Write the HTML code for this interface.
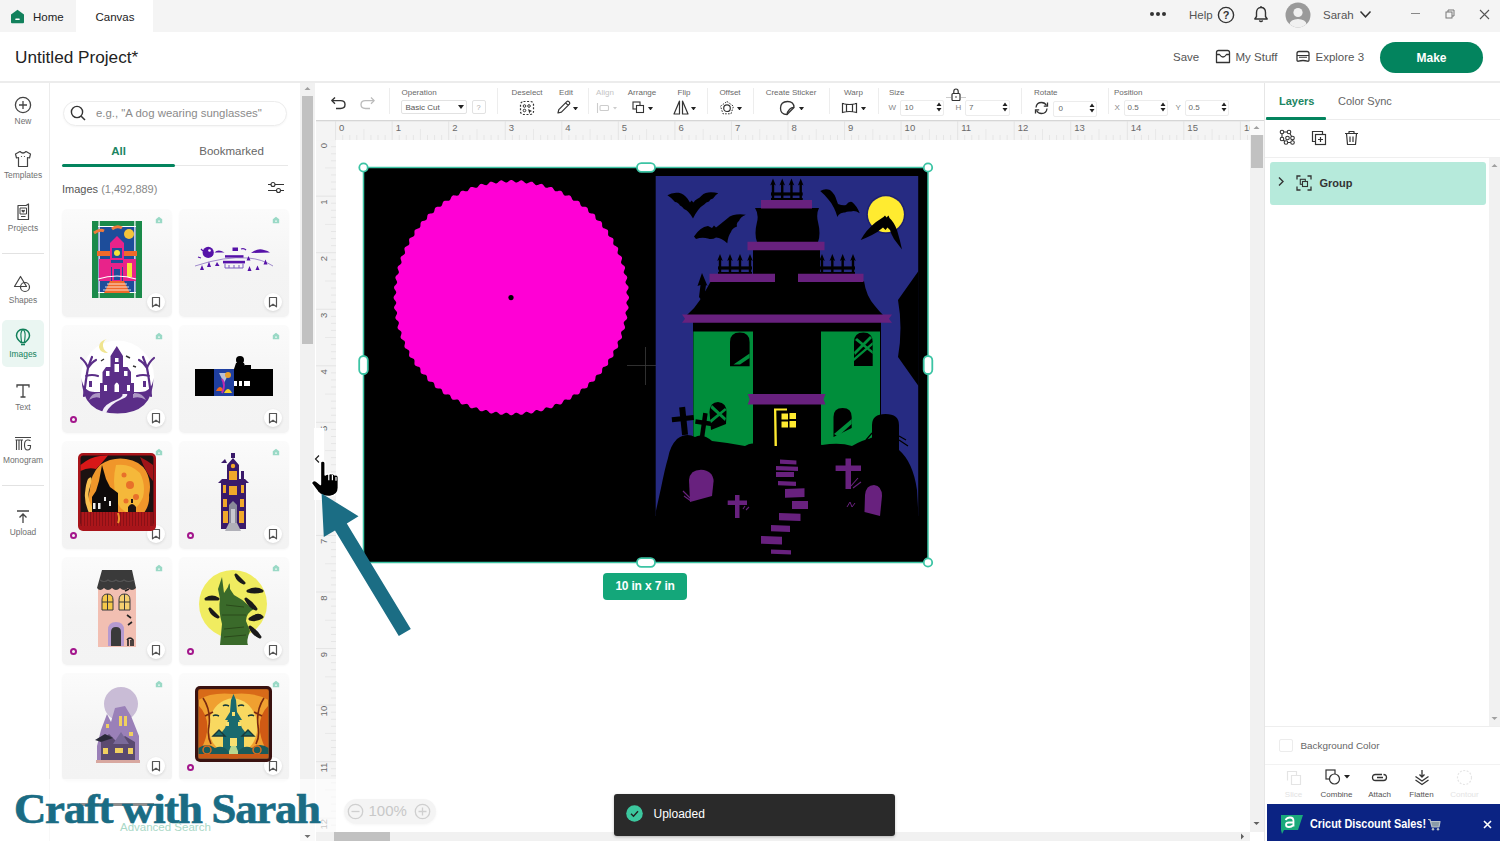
<!DOCTYPE html>
<html><head><meta charset="utf-8">
<style>
*{box-sizing:border-box;margin:0;padding:0}
html,body{width:1500px;height:841px;overflow:hidden;background:#fff;font-family:"Liberation Sans",sans-serif;color:#333}
.a{position:absolute}
.t{position:absolute;white-space:nowrap;line-height:1}
svg{display:block}
.lbl{font-size:8px;color:#6a6a6a;margin-top:1px}
.inp{height:16px;border:1px solid #ececec;border-radius:2px}

.card{width:110px;height:108px;border-radius:5px;background:linear-gradient(180deg,#fbfbfb 0%,#f4f4f4 55%,#f3f3f3 100%);box-shadow:0 1px 2px rgba(0,0,0,.03)}
.bm{width:18px;height:18px;border-radius:50%;background:#fff;box-shadow:0 1px 3px rgba(0,0,0,.12)}

</style></head><body>
<div class="a" style="left:0;top:0;width:1500px;height:841px;overflow:hidden">

<!-- top bar -->
<div class="a" style="left:0;top:0;width:1500px;height:32px;background:#f4f4f4"></div>
<div class="a" style="left:76px;top:0;width:77px;height:32px;background:#fff"></div>
<svg class="a" style="left:10px;top:9px" width="15" height="15" viewBox="0 0 15 15"><path d="M7.5 0.8 L14 5.6 V13.2 Q14 14.2 13 14.2 H2 Q1 14.2 1 13.2 V5.6 Z" fill="#12815c"/><rect x="5.3" y="9.6" width="4.4" height="1.4" fill="#fff" rx=".5"/></svg>
<div class="t" style="left:33px;top:11.5px;font-size:11.5px;color:#222">Home</div>
<div class="t" style="left:95.5px;top:11.5px;font-size:11.5px;color:#222">Canvas</div>
<div class="a" style="left:1150px;top:12px;width:4px;height:4px;border-radius:2px;background:#333"></div>
<div class="a" style="left:1156px;top:12px;width:4px;height:4px;border-radius:2px;background:#333"></div>
<div class="a" style="left:1162px;top:12px;width:4px;height:4px;border-radius:2px;background:#333"></div>
<div class="t" style="left:1189px;top:10px;font-size:11.5px;color:#555">Help</div>
<svg class="a" style="left:1217px;top:6px" width="18" height="18" viewBox="0 0 18 18"><circle cx="9" cy="9" r="7.6" fill="none" stroke="#333" stroke-width="1.4"/><text x="9" y="13" text-anchor="middle" font-family="Liberation Sans" font-weight="bold" font-size="11" fill="#333">?</text></svg>
<svg class="a" style="left:1252px;top:5px" width="18" height="19" viewBox="0 0 18 19"><path d="M9 2.5 C5.8 2.5 4.5 5 4.5 7.5 V11.5 L2.8 14 H15.2 L13.5 11.5 V7.5 C13.5 5 12.2 2.5 9 2.5 Z" fill="none" stroke="#333" stroke-width="1.4" stroke-linejoin="round"/><path d="M7.3 15.5 Q9 17.6 10.7 15.5" fill="none" stroke="#333" stroke-width="1.3"/><line x1="9" y1="1" x2="9" y2="2.5" stroke="#333" stroke-width="1.3"/></svg>
<svg class="a" style="left:1285px;top:2px" width="26" height="26" viewBox="0 0 26 26"><defs><clipPath id="av"><circle cx="13" cy="13" r="12.5"/></clipPath></defs><circle cx="13" cy="13" r="12.5" fill="#9a9a9a"/><g clip-path="url(#av)"><circle cx="13" cy="10.5" r="4.6" fill="#f0f0f0"/><ellipse cx="13" cy="22.5" rx="8.5" ry="5.5" fill="#f0f0f0"/></g></svg>
<div class="t" style="left:1323px;top:10px;font-size:11.5px;color:#555">Sarah</div>
<svg class="a" style="left:1359px;top:10px" width="13" height="9" viewBox="0 0 13 9"><path d="M1.5 1.5 L6.5 6.8 L11.5 1.5" fill="none" stroke="#333" stroke-width="1.5"/></svg>
<div class="a" style="left:1411px;top:13px;width:9px;height:1px;background:#888"></div>
<svg class="a" style="left:1445px;top:9px" width="10" height="10" viewBox="0 0 10 10"><rect x="1" y="3" width="6" height="6" fill="none" stroke="#777" stroke-width="1"/><path d="M3 3 V1 H9 V7 H7" fill="none" stroke="#777" stroke-width="1"/></svg>
<svg class="a" style="left:1479px;top:9px" width="11" height="11" viewBox="0 0 11 11"><path d="M1 1 L10 10 M10 1 L1 10" stroke="#555" stroke-width="1.1"/></svg>

<!-- header -->
<div class="a" style="left:0;top:81px;width:1500px;height:2px;background:#ececec"></div>
<div class="t" style="left:15px;top:48.5px;font-size:17.2px;color:#222">Untitled Project*</div>
<div class="t" style="left:1173px;top:52px;font-size:11.5px;color:#555">Save</div>
<svg class="a" style="left:1215px;top:49px" width="16" height="15" viewBox="0 0 16 15"><path d="M1.5 3.5 Q1.5 1.5 3.5 1.5 H12.5 Q14.5 1.5 14.5 3.5 V13.5 H1.5 Z" fill="none" stroke="#333" stroke-width="1.3" stroke-linejoin="round"/><path d="M1.5 5.5 H4.5 Q8 10.5 11.5 5.5 H14.5" fill="none" stroke="#333" stroke-width="1.3" stroke-linejoin="round"/></svg>
<div class="t" style="left:1235.5px;top:52px;font-size:11.5px;color:#555">My Stuff</div>
<svg class="a" style="left:1295px;top:50px" width="16" height="13" viewBox="0 0 16 13"><path d="M2 3.5 Q2 1.5 4 1.5 H12 Q14 1.5 14 3.5 V10 Q14 11.5 12.5 11.2 Q8 9.8 3.5 11.2 Q2 11.5 2 10 Z" fill="none" stroke="#333" stroke-width="1.3" stroke-linejoin="round"/><path d="M2 5.5 H14 M4 7.3 H12" stroke="#333" stroke-width="1.1"/></svg>
<div class="t" style="left:1315.5px;top:52px;font-size:11.5px;color:#555">Explore 3</div>
<div class="a" style="left:1380px;top:41.5px;width:103px;height:31px;border-radius:16px;background:#03845e"></div>
<div class="t" style="left:1380px;top:51.5px;width:103px;text-align:center;font-size:12px;font-weight:bold;color:#fff">Make</div>

<!-- left rail -->
<div class="a" style="left:49px;top:83px;width:1px;height:758px;background:#ececec"></div>
<svg class="a" style="left:14px;top:96px" width="18" height="18" viewBox="0 0 18 18"><circle cx="9" cy="9" r="7.6" fill="none" stroke="#444" stroke-width="1.3"/><path d="M9 5 V13 M5 9 H13" stroke="#444" stroke-width="1.3"/></svg>
<div class="t" style="left:0;top:117px;width:46px;text-align:center;font-size:8.4px;color:#707070">New</div>
<svg class="a" style="left:14px;top:150px" width="18" height="18" viewBox="0 0 18 18"><path d="M6 1.5 L1.5 4 L2.5 8 L4.5 7.5 V16.5 H13.5 V7.5 L15.5 8 L16.5 4 L12 1.5 Q9 4.5 6 1.5 Z" fill="none" stroke="#444" stroke-width="1.2" stroke-linejoin="round"/><circle cx="7.5" cy="6.5" r=".6" fill="#444"/><circle cx="10.5" cy="6.5" r=".6" fill="#444"/></svg>
<div class="t" style="left:0;top:171px;width:46px;text-align:center;font-size:8.4px;color:#707070">Templates</div>
<svg class="a" style="left:15px;top:203px" width="16" height="18" viewBox="0 0 16 18"><path d="M3 2.5 H11 L13.5 1 V16.5 H3 Z" fill="none" stroke="#444" stroke-width="1.2" stroke-linejoin="round"/><path d="M5 5 H11.5 V11 H5 Z" fill="none" stroke="#444" stroke-width="1"/><path d="M8.2 9.8 L6.6 8.2 Q6 7.2 7 6.7 Q7.7 6.5 8.2 7.2 Q8.7 6.5 9.4 6.7 Q10.4 7.2 9.8 8.2 Z" fill="#444"/><path d="M6 13.5 H10.5" stroke="#444" stroke-width="1"/></svg>
<div class="t" style="left:0;top:224px;width:46px;text-align:center;font-size:8.4px;color:#707070">Projects</div>
<div class="a" style="left:2px;top:253px;width:42px;height:1px;background:#e2e2e2"></div>
<svg class="a" style="left:13px;top:275px" width="20" height="18" viewBox="0 0 20 18"><path d="M7.5 1.5 L1.5 11.5 H13.5 Z" fill="none" stroke="#444" stroke-width="1.2" stroke-linejoin="round"/><circle cx="12" cy="12" r="4.5" fill="none" stroke="#444" stroke-width="1.2"/></svg>
<div class="t" style="left:0;top:296px;width:46px;text-align:center;font-size:8.4px;color:#707070">Shapes</div>
<div class="a" style="left:2px;top:320px;width:42px;height:47px;border-radius:5px;background:#eaf6f2"></div>
<svg class="a" style="left:15px;top:328px" width="16" height="19" viewBox="0 0 16 19"><path d="M8 1.2 C3.8 1.2 1.5 4.3 1.5 7.5 C1.5 10.5 4 12.8 6 14.5 H10 C12 12.8 14.5 10.5 14.5 7.5 C14.5 4.3 12.2 1.2 8 1.2 Z" fill="none" stroke="#12805b" stroke-width="1.5"/><path d="M8 1.5 C6 3 5.6 6 6 9 L6.5 14.5 M8 1.5 C10 3 10.4 6 10 9 L9.5 14.5" fill="none" stroke="#12805b" stroke-width="1.2"/><path d="M6 16.5 H10" stroke="#12805b" stroke-width="1.6"/></svg>
<div class="t" style="left:0;top:350px;width:46px;text-align:center;font-size:8.4px;color:#12805b">Images</div>
<svg class="a" style="left:15px;top:383px" width="16" height="16" viewBox="0 0 16 16"><path d="M2 4.5 V2 H14 V4.5 M8 2 V14 M5.5 14 H10.5" fill="none" stroke="#444" stroke-width="1.3"/></svg>
<div class="t" style="left:0;top:403px;width:46px;text-align:center;font-size:8.4px;color:#707070">Text</div>
<svg class="a" style="left:14px;top:436px" width="18" height="16" viewBox="0 0 18 16"><path d="M1 1.5 H17 M1.5 4 H9 M2.5 4 V14 M5 4 V14 M7.5 4 V14 M16.5 5 Q15.5 3.8 13.5 4 Q10.5 4.3 10.5 9 Q10.5 14 13.5 14 Q16.5 14 16.5 10.5 V9.5 H13.5" fill="none" stroke="#444" stroke-width="1.1"/></svg>
<div class="t" style="left:0;top:456px;width:46px;text-align:center;font-size:8.4px;color:#707070">Monogram</div>
<div class="a" style="left:2px;top:485px;width:42px;height:1px;background:#e2e2e2"></div>
<svg class="a" style="left:15px;top:509px" width="16" height="16" viewBox="0 0 16 16"><path d="M2 2 H14 M8 5 V14 M4.5 8.5 L8 5 L11.5 8.5" fill="none" stroke="#444" stroke-width="1.3"/></svg>
<div class="t" style="left:0;top:528px;width:46px;text-align:center;font-size:8.4px;color:#707070">Upload</div>

<!-- left panel -->
<div class="a" style="left:63px;top:101px;width:224px;height:25px;border-radius:13px;border:1px solid #ececec;box-shadow:0 1px 2px rgba(0,0,0,.04)"></div>
<svg class="a" style="left:70px;top:105px" width="17" height="16" viewBox="0 0 17 16"><circle cx="7" cy="7" r="5.6" fill="none" stroke="#333" stroke-width="1.4"/><path d="M11.2 11.2 L15 15" stroke="#333" stroke-width="1.5"/></svg>
<div class="t" style="left:96px;top:108px;font-size:11.4px;color:#8a8a8a">e.g., "A dog wearing sunglasses"</div>
<div class="t" style="left:62px;top:146px;width:113px;text-align:center;font-size:11.5px;font-weight:bold;color:#1b8562">All</div>
<div class="t" style="left:175px;top:146px;width:113px;text-align:center;font-size:11.5px;color:#666">Bookmarked</div>
<div class="a" style="left:62px;top:165px;width:226px;height:1px;background:#e8e8e8"></div>
<div class="a" style="left:62px;top:164px;width:113px;height:3px;border-radius:2px;background:#03845e"></div>
<div class="t" style="left:62px;top:183.5px;font-size:11px;color:#555">Images <span style="color:#888">(1,492,889)</span></div>
<svg class="a" style="left:267px;top:181px" width="18" height="13" viewBox="0 0 18 13"><path d="M1 3.5 H17 M1 9.5 H17" stroke="#333" stroke-width="1.1"/><circle cx="6" cy="3.5" r="2" fill="#fff" stroke="#333" stroke-width="1.1"/><circle cx="11.5" cy="9.5" r="2" fill="#fff" stroke="#333" stroke-width="1.1"/></svg>
<!-- cards -->
<div class="a card" style="left:62px;top:209px"></div>
<svg class="a" style="left:155px;top:216px" width="8" height="8" viewBox="0 0 8 8"><path d="M4 0.8 L7.2 3.2 V7.2 H0.8 V3.2 Z" fill="#9ad9c6"/><rect x="3" y="4.6" width="2" height="1" fill="#fff"/></svg>
<div class="a bm" style="left:147px;top:293px"><svg width="18" height="18" viewBox="0 0 18 18"><path d="M5.5 4.5 H12.5 V13.8 L9 11.2 L5.5 13.8 Z" fill="none" stroke="#555" stroke-width="1.2" stroke-linejoin="round"/></svg></div>
<div class="a card" style="left:179px;top:209px"></div>
<svg class="a" style="left:272px;top:216px" width="8" height="8" viewBox="0 0 8 8"><path d="M4 0.8 L7.2 3.2 V7.2 H0.8 V3.2 Z" fill="#9ad9c6"/><rect x="3" y="4.6" width="2" height="1" fill="#fff"/></svg>
<div class="a bm" style="left:264px;top:293px"><svg width="18" height="18" viewBox="0 0 18 18"><path d="M5.5 4.5 H12.5 V13.8 L9 11.2 L5.5 13.8 Z" fill="none" stroke="#555" stroke-width="1.2" stroke-linejoin="round"/></svg></div>
<div class="a card" style="left:62px;top:325px"></div>
<svg class="a" style="left:155px;top:332px" width="8" height="8" viewBox="0 0 8 8"><path d="M4 0.8 L7.2 3.2 V7.2 H0.8 V3.2 Z" fill="#9ad9c6"/><rect x="3" y="4.6" width="2" height="1" fill="#fff"/></svg>
<div class="a bm" style="left:147px;top:409px"><svg width="18" height="18" viewBox="0 0 18 18"><path d="M5.5 4.5 H12.5 V13.8 L9 11.2 L5.5 13.8 Z" fill="none" stroke="#555" stroke-width="1.2" stroke-linejoin="round"/></svg></div>
<div class="a" style="left:70px;top:416px;width:7px;height:7px;border-radius:50%;border:2px solid #a3168c"></div>
<div class="a card" style="left:179px;top:325px"></div>
<svg class="a" style="left:272px;top:332px" width="8" height="8" viewBox="0 0 8 8"><path d="M4 0.8 L7.2 3.2 V7.2 H0.8 V3.2 Z" fill="#9ad9c6"/><rect x="3" y="4.6" width="2" height="1" fill="#fff"/></svg>
<div class="a bm" style="left:264px;top:409px"><svg width="18" height="18" viewBox="0 0 18 18"><path d="M5.5 4.5 H12.5 V13.8 L9 11.2 L5.5 13.8 Z" fill="none" stroke="#555" stroke-width="1.2" stroke-linejoin="round"/></svg></div>
<div class="a card" style="left:62px;top:441px"></div>
<svg class="a" style="left:155px;top:448px" width="8" height="8" viewBox="0 0 8 8"><path d="M4 0.8 L7.2 3.2 V7.2 H0.8 V3.2 Z" fill="#9ad9c6"/><rect x="3" y="4.6" width="2" height="1" fill="#fff"/></svg>
<div class="a bm" style="left:147px;top:525px"><svg width="18" height="18" viewBox="0 0 18 18"><path d="M5.5 4.5 H12.5 V13.8 L9 11.2 L5.5 13.8 Z" fill="none" stroke="#555" stroke-width="1.2" stroke-linejoin="round"/></svg></div>
<div class="a" style="left:70px;top:532px;width:7px;height:7px;border-radius:50%;border:2px solid #a3168c"></div>
<div class="a card" style="left:179px;top:441px"></div>
<svg class="a" style="left:272px;top:448px" width="8" height="8" viewBox="0 0 8 8"><path d="M4 0.8 L7.2 3.2 V7.2 H0.8 V3.2 Z" fill="#9ad9c6"/><rect x="3" y="4.6" width="2" height="1" fill="#fff"/></svg>
<div class="a bm" style="left:264px;top:525px"><svg width="18" height="18" viewBox="0 0 18 18"><path d="M5.5 4.5 H12.5 V13.8 L9 11.2 L5.5 13.8 Z" fill="none" stroke="#555" stroke-width="1.2" stroke-linejoin="round"/></svg></div>
<div class="a" style="left:187px;top:532px;width:7px;height:7px;border-radius:50%;border:2px solid #a3168c"></div>
<div class="a card" style="left:62px;top:557px"></div>
<svg class="a" style="left:155px;top:564px" width="8" height="8" viewBox="0 0 8 8"><path d="M4 0.8 L7.2 3.2 V7.2 H0.8 V3.2 Z" fill="#9ad9c6"/><rect x="3" y="4.6" width="2" height="1" fill="#fff"/></svg>
<div class="a bm" style="left:147px;top:641px"><svg width="18" height="18" viewBox="0 0 18 18"><path d="M5.5 4.5 H12.5 V13.8 L9 11.2 L5.5 13.8 Z" fill="none" stroke="#555" stroke-width="1.2" stroke-linejoin="round"/></svg></div>
<div class="a" style="left:70px;top:648px;width:7px;height:7px;border-radius:50%;border:2px solid #a3168c"></div>
<div class="a card" style="left:179px;top:557px"></div>
<svg class="a" style="left:272px;top:564px" width="8" height="8" viewBox="0 0 8 8"><path d="M4 0.8 L7.2 3.2 V7.2 H0.8 V3.2 Z" fill="#9ad9c6"/><rect x="3" y="4.6" width="2" height="1" fill="#fff"/></svg>
<div class="a bm" style="left:264px;top:641px"><svg width="18" height="18" viewBox="0 0 18 18"><path d="M5.5 4.5 H12.5 V13.8 L9 11.2 L5.5 13.8 Z" fill="none" stroke="#555" stroke-width="1.2" stroke-linejoin="round"/></svg></div>
<div class="a" style="left:187px;top:648px;width:7px;height:7px;border-radius:50%;border:2px solid #a3168c"></div>
<div class="a card" style="left:62px;top:673px"></div>
<svg class="a" style="left:155px;top:680px" width="8" height="8" viewBox="0 0 8 8"><path d="M4 0.8 L7.2 3.2 V7.2 H0.8 V3.2 Z" fill="#9ad9c6"/><rect x="3" y="4.6" width="2" height="1" fill="#fff"/></svg>
<div class="a bm" style="left:147px;top:757px"><svg width="18" height="18" viewBox="0 0 18 18"><path d="M5.5 4.5 H12.5 V13.8 L9 11.2 L5.5 13.8 Z" fill="none" stroke="#555" stroke-width="1.2" stroke-linejoin="round"/></svg></div>
<div class="a card" style="left:179px;top:673px"></div>
<svg class="a" style="left:272px;top:680px" width="8" height="8" viewBox="0 0 8 8"><path d="M4 0.8 L7.2 3.2 V7.2 H0.8 V3.2 Z" fill="#9ad9c6"/><rect x="3" y="4.6" width="2" height="1" fill="#fff"/></svg>
<div class="a bm" style="left:264px;top:757px"><svg width="18" height="18" viewBox="0 0 18 18"><path d="M5.5 4.5 H12.5 V13.8 L9 11.2 L5.5 13.8 Z" fill="none" stroke="#555" stroke-width="1.2" stroke-linejoin="round"/></svg></div>
<div class="a" style="left:187px;top:764px;width:7px;height:7px;border-radius:50%;border:2px solid #a3168c"></div>
<!-- thumb 1: stained glass house -->
<svg class="a" style="left:92px;top:221px" width="50" height="77" viewBox="0 0 50 77">
<rect x="0" y="0" width="50" height="77" fill="#1a8a4a"/>
<rect x="4" y="4" width="42" height="69" fill="#fff"/>
<rect x="6" y="6" width="38" height="65" fill="#1d4d9a"/>
<rect x="0" y="0" width="6" height="77" fill="#1a8a4a"/><rect x="44" y="0" width="6" height="77" fill="#1a8a4a"/>
<rect x="0" y="0" width="50" height="5" fill="#1a8a4a"/><rect x="0" y="72" width="50" height="5" fill="#1a8a4a"/>
<rect x="6.5" y="0" width="1.2" height="77" fill="#fff"/><rect x="42.3" y="0" width="1.2" height="77" fill="#fff"/>
<path d="M2 12 Q8 8 12 10 M20 8 Q25 4 30 7" stroke="#f07a3a" stroke-width="3" fill="none"/>
<circle cx="37" cy="13" r="5" fill="#f5c43a"/>
<path d="M5 35 H45 V30 H5 Z" fill="#f06a2a"/>
<path d="M18 22 L25 15 L32 22 V28 H18 Z" fill="#e8238a"/>
<rect x="19" y="26" width="12" height="12" fill="#1d4d9a" stroke="#e8238a" stroke-width="2"/>
<circle cx="25" cy="32" r="3" fill="#f5e33a"/>
<path d="M7 38 H19 V60 H7 Z" fill="#e8238a"/>
<path d="M31 38 H44 V60 H31 Z" fill="#e8238a"/>
<rect x="35" y="42" width="5" height="14" fill="#f5e33a"/>
<rect x="19" y="42" width="12" height="4" fill="#e8238a"/>
<rect x="21" y="47" width="8" height="13" fill="#1d4d9a" stroke="#e8238a" stroke-width="2"/>
<path d="M12 72 L18 60 H32 L38 72 Z" fill="#f06a2a"/>
<path d="M13 66 H37 M15 63 H35 M11 69 H39" stroke="#fff" stroke-width=".8"/>
<path d="M6 58 Q25 52 44 58" stroke="#fff" stroke-width="1.2" fill="none"/>
</svg>
<!-- thumb 2: purple landscape -->
<svg class="a" style="left:190px;top:240px" width="90" height="40" viewBox="190 240 90 40">
<path d="M195 266 Q225 256 248 258 Q262 259 273 266" stroke="#8a70c0" stroke-width=".8" fill="none"/>
<circle cx="208.2" cy="252.4" r="5.6" fill="#5612a8"/><circle cx="209.5" cy="250.5" r="1.3" fill="#fff"/>
<path d="M214.5 252.5 Q218 248.5 224.5 252.5 Z" fill="#5612a8"/>
<path d="M201 249 L203 251 M198 257 L201 258" stroke="#5612a8" stroke-width="1.2"/>
<rect x="232.5" y="247.5" width="5.5" height="3.5" fill="#5612a8"/>
<rect x="225" y="255.2" width="18.5" height="2.4" fill="#5612a8"/>
<rect x="223" y="260.8" width="22" height="2.6" fill="#5612a8"/>
<path d="M225 263.5 V268 H243 V263.5 M229 268 V265 M234 268 V265 M239 268 V265" stroke="#7a5ac0" stroke-width="1" fill="none"/>
<path d="M241 249 Q244 248 246 250" stroke="#5612a8" stroke-width="1.3" fill="none"/>
<path d="M251 253 Q258 247.5 264 250 Q268 250.5 270 252.5 Z" fill="#5612a8"/>
<path d="M200 270 L202 265 L204 270 Z M207 267 L209 261.5 L211 267 Z M215 266 L217 262 L219.5 266 Z M246.5 260.5 L248.5 256 L250.5 260.5 Z M247.5 271 L249.5 266 L251.5 271 Z M255.5 270 L257.5 265.5 L259.5 270 Z M263.5 264.5 L265.5 259.5 L267.5 264.5 Z" fill="#5612a8"/>
</svg>
<!-- thumb 3: purple circle house -->
<svg class="a" style="left:75px;top:330px" width="85" height="90" viewBox="75 330 85 90">
<circle cx="117.5" cy="377" r="36.5" fill="#fff"/>
<path d="M107 339 Q99 341 99 347 Q100 353 108 353 Q102 349 103 344 Q104 340 107 339 Z" fill="#f0e590"/>
<path d="M81.5 378 Q82 413.5 117.5 413.5 Q153 413.5 153.5 378 Q152 392 140 392 H95 Q83 392 81.5 378 Z" fill="#5b2e88"/>
<path d="M106 413 Q110 404 122 399 Q130 396 126 392 H121 Q126 396 116 400 Q104 404 102 412 Z" fill="#f2eef8"/>
<path d="M133 393 Q142 392 146 400 Q140 396 133 398 Z M100 393 Q92 392 89 400 Q95 396 100 398 Z" fill="#fff" opacity=".5"/>
<path d="M84 396 Q86 378 88 368 Q86 362 81 358 M88 368 Q92 362 96 360 M86 376 Q92 374 98 376 M88 368 Q90 362 92 357 M151 396 Q149 378 147 368 Q149 362 154 358 M147 368 Q143 362 139 360 M149 376 Q143 374 137 376 M147 368 Q145 362 143 357" stroke="#5b2e88" stroke-width="2.2" fill="none" stroke-linecap="round"/>
<path d="M100 394 V383 H102.5 V372 L106 367 H110.5 V356 L116.8 346 L123 356 V367 H127.5 L131 372 V383 H134 V394 Z" fill="#5b2e88"/>
<path d="M115 358 H118.5 V362 H115 Z M114.5 364 H119 V372 H114.5 Z M106 371 H109.5 V376 H106 Z M124 371 H127.5 V376 H124 Z M104 385 H107 V391 H104 Z M127 385 H130 V391 H127 Z M114.5 385 Q116.8 380 119 385 V392 H114.5 Z" fill="#fff"/>
<path d="M89 387 V381 H92 V387 M143 387 V381 H146 V387" fill="#5b2e88"/>
<path d="M101 361 L104 359 M126 356 L130 358 M133 366 L136 367" stroke="#333" stroke-width="1.4"/>
</svg>
<!-- thumb 4: black strip -->
<svg class="a" style="left:194px;top:355px" width="80" height="42" viewBox="0 0 80 42">
<rect x="1" y="14" width="78" height="27" fill="#000"/>
<circle cx="46" cy="5" r="4" fill="#000"/><path d="M42 8 H50 L52 14 H40 Z" fill="#000"/>
<path d="M51 10 H57 V14 H51 Z" fill="#000"/>
<rect x="20" y="14" width="20" height="27" fill="#1f3fa0"/>
<path d="M25 18 L30 28 L35 18 Z" fill="#e0e0e0" opacity=".8"/>
<circle cx="34" cy="20" r="3" fill="#e8a02a"/>
<path d="M22 36 Q26 28 30 36 Z" fill="#f26a1a"/><path d="M30 38 Q34 30 38 38 Z" fill="#f5d02a"/>
<path d="M28 24 Q32 30 28 38" stroke="#c02ab0" stroke-width="2" fill="none"/>
<rect x="40" y="26" width="16" height="5" fill="#fff"/>
<rect x="43" y="25" width="2" height="6" fill="#000"/><rect x="48" y="25" width="2" height="6" fill="#000"/>
</svg>
<!-- thumb 5: red square -->
<svg class="a" style="left:78px;top:453px" width="78" height="78" viewBox="0 0 78 78">
<rect x="0" y="0" width="78" height="78" rx="5" fill="#a8141a"/>
<rect x="2.5" y="2.5" width="73" height="70" rx="3" fill="#1c1212"/>
<path d="M22 12 Q34 4 48 6 Q62 8 68 18 Q74 30 71 42 Q72 54 64 62 H14 Q8 50 12 36 Q12 22 22 12 Z" fill="#f0962a"/>
<path d="M38 12 Q52 10 62 20 Q68 32 65 44 Q60 56 50 60 Q40 56 38 44 Q34 28 38 12 Z" fill="#f5b83a"/>
<circle cx="52" cy="32" r="4" fill="#e8702a"/><circle cx="58" cy="44" r="3" fill="#e8702a"/><circle cx="46" cy="22" r="2.5" fill="#e8702a"/><circle cx="48" cy="48" r="2.5" fill="#e8702a"/>
<path d="M10 26 Q16 20 12 34 Q8 44 14 54 Q18 60 12 62 Q6 50 7 40 Q8 30 10 26 Z" fill="#f8c050"/>
<path d="M2.5 12 Q12 4 22 3 L30 2.5 Q24 10 18 16 Q10 14 2.5 18 Z" fill="#d81818"/>
<path d="M62 4 Q70 8 75 12 V28 Q68 20 62 4 Z" fill="#a01418"/>
<path d="M14 62 V44 L18 38 L21 28 L24 12 L28 26 L32 34 L40 40 V62 Z" fill="#0e0a0a"/>
<rect x="15" y="50" width="2.5" height="6" fill="#eee"/><rect x="20" y="50" width="2.5" height="6" fill="#eee"/><rect x="26" y="44" width="2" height="4" fill="#eee"/><rect x="31" y="48" width="2" height="5" fill="#eee"/>
<path d="M50 62 V54 Q54 48 58 54 V62 Z M53 50 V46 H55 V50 Z" fill="#1a1414"/>
<rect x="2.5" y="59" width="73" height="14" fill="#8a1016"/>
<path d="M5 59 V73 M8 59 V73 M11 59 V73 M14 59 V73 M17 59 V73 M20 59 V73 M23 59 V73 M26 59 V73 M29 59 V73 M32 59 V73 M35 59 V73 M38 59 V73 M41 59 V73 M44 59 V73 M47 59 V73 M50 59 V73 M53 59 V73 M56 59 V73 M59 59 V73 M62 59 V73 M65 59 V73 M68 59 V73 M71 59 V73" stroke="#c81c20" stroke-width="1.1"/>
<path d="M40 60 Q42 66 40 70" stroke="#f0962a" stroke-width="2" fill="none"/>
</svg>
<!-- thumb 6: tall purple house -->
<svg class="a" style="left:217px;top:453px" width="33" height="78" viewBox="0 0 33 78">
<path d="M4 76 V30 H1 L5 26 H10 V12 L16 5 L22 12 V26 H28 L32 30 H29 V76 Z" fill="#3a1a6a"/>
<path d="M14 5 V0 H18 V5 Z M4 10 L8 6 L10 10 Z M24 26 V18 H27 V26 Z" fill="#3a1a6a"/>
<circle cx="16" cy="13" r="2.2" fill="#f0a82a"/>
<rect x="12" y="18" width="8" height="9" fill="#f0a82a"/>
<rect x="12" y="33" width="8" height="9" fill="#f0a82a"/>
<rect x="6" y="32" width="3" height="8" fill="#f0a82a"/><rect x="24" y="32" width="3" height="8" fill="#f0a82a"/>
<rect x="6" y="46" width="4" height="8" fill="#f0a82a"/><rect x="23" y="46" width="4" height="8" fill="#f0a82a"/>
<rect x="6" y="58" width="5" height="12" fill="#f0a82a"/><rect x="22" y="58" width="5" height="12" fill="#f0a82a"/>
<path d="M12 70 V52 L16 48 L20 52 V70 Z" fill="#8a8a9a"/>
<path d="M8 78 L12 70 H20 L24 78 Z" fill="#b0b0b8"/>
<rect x="14" y="56" width="4" height="14" fill="#c8c8d0"/>
</svg>
<!-- thumb 7: pink house -->
<svg class="a" style="left:97px;top:570px" width="40" height="77" viewBox="0 0 40 77">
<rect x="1" y="18" width="38" height="59" fill="#f2bfb2"/>
<path d="M5 0 H35 L39 18 Q35 22 31 18 Q27 22 23 18 Q19 22 15 18 Q11 22 7 18 Q3 22 0 18 Z" fill="#3a3a3a"/>
<path d="M3 10 Q7 13 11 10 Q15 13 19 10 Q23 13 27 10 Q31 13 37 10" stroke="#555" stroke-width="1.2" fill="none"/>
<path d="M5 40 V30 Q5 24 10.5 24 Q16 24 16 30 V40 Z" fill="#f5c84a" stroke="#3a3a3a" stroke-width="1"/>
<path d="M22 40 V30 Q22 24 27.5 24 Q33 24 33 30 V40 Z" fill="#f5d070" stroke="#3a3a3a" stroke-width="1"/>
<path d="M10.5 24 V40 M5 32 H16 M27.5 24 V40 M22 32 H33" stroke="#3a3a3a" stroke-width="1"/>
<path d="M11 76 V60 Q11 52 19 52 Q27 52 27 60 V76 Z" fill="#b59ad0"/>
<path d="M14 76 V62 Q14 57 19 57 Q24 57 24 62 V76 Z" fill="#3a3a3a"/>
<path d="M30 70 Q33 66 36 70 V76 M31 76 V70 M34 76 V70" stroke="#222" stroke-width="1.6" fill="none"/>
<path d="M30 45 L34 48 M31 55 L35 52 M28 21 L32 19" stroke="#222" stroke-width="1.6"/>
</svg>
<!-- thumb 8: moon tower -->
<svg class="a" style="left:198px;top:569px" width="72" height="78" viewBox="0 0 72 78">
<circle cx="35" cy="35" r="34" fill="#f0ec60"/>
<path d="M22 76 L24 55 Q20 40 22 30 L20 20 L24 8 L26 24 L30 18 Q32 10 32 20 L36 26 Q44 30 50 36 L56 40 Q48 44 48 52 L52 62 Q48 72 50 76 Z" fill="#3a6a2a"/>
<path d="M26 60 L46 58 M24 46 L48 46 M28 36 L46 38 M26 68 L48 66" stroke="#2a4a1a" stroke-width="1"/>
<path d="M8 30 Q14 26 20 30 Q14 30 8 30 Z M38 6 Q42 10 46 14 Q40 12 38 6 Z M50 22 Q58 18 64 22 Q56 24 50 22 Z M48 30 Q54 34 58 40 Q52 38 48 30 Z M12 40 Q16 44 20 48 Q14 46 12 40 Z M52 50 Q60 44 64 48 Q58 52 52 50 Z M52 58 Q58 62 62 68 Q56 66 52 58 Z" stroke="#1a1a1a" stroke-width="3" fill="#1a1a1a" stroke-linejoin="round"/>
</svg>
<!-- thumb 9: purple victorian -->
<svg class="a" style="left:95px;top:686px" width="46" height="77" viewBox="0 0 46 77">
<circle cx="26" cy="18" r="17" fill="#c9bcd6"/>
<path d="M2 60 L6 44 L12 28 L16 36 L20 22 L30 20 L36 30 L40 40 L44 50 V74 H2 Z" fill="#9a80b8"/>
<path d="M6 74 V56 L14 48 L22 56 L30 50 L40 56 V74 Z" fill="#5a4a70"/>
<path d="M18 58 L26 46 L34 58 Z" fill="#7a6a9a"/>
<rect x="24" y="30" width="3" height="10" fill="#f0d060"/><rect x="29" y="30" width="3" height="10" fill="#f0d060"/>
<rect x="11" y="38" width="3" height="4" fill="#f0d060"/><rect x="34" y="46" width="4" height="4" fill="#f0d060"/>
<rect x="8" y="62" width="5" height="6" fill="#f0d060"/><rect x="20" y="62" width="8" height="5" fill="#f0d060"/><rect x="33" y="62" width="5" height="6" fill="#f0d060"/>
<path d="M0 54 L10 48 L18 52 L6 56 Z" fill="#2a2a3a"/>
<path d="M1 74 H45 V77 H1 Z" fill="#d8a8a0"/>
</svg>
<!-- thumb 10: orange square -->
<svg class="a" style="left:195px;top:686px" width="77" height="76" viewBox="0 0 77 76">
<rect x="0" y="0" width="77" height="76" rx="5" fill="#3a1210"/>
<rect x="3.5" y="3.5" width="70" height="69" rx="2" fill="#f0a030"/>
<path d="M3.5 3.5 H73.5 V14 Q60 6 38 8 Q16 6 3.5 14 Z" fill="#d86a18"/>
<path d="M38 12 Q56 14 62 34 Q64 52 54 62 H22 Q12 52 14 34 Q20 14 38 12 Z" fill="#f8d860"/>
<path d="M4 20 Q14 30 12 46 Q10 58 4 66 Z M73 20 Q63 30 65 46 Q67 58 73 66 Z" fill="#d05a14"/>
<path d="M8 12 Q16 24 14 40 Q12 50 16 58 M10 30 L18 26 M69 12 Q61 24 63 40 Q65 50 61 58 M67 30 L59 26" stroke="#7a2a10" stroke-width="1.6" fill="none"/>
<path d="M28 66 V50 L24 50 L30 42 L33 34 L30 34 L35 26 L36 14 L38.5 8 L41 14 L42 26 L47 34 L44 34 L47 42 L53 50 L49 50 V66 Z" fill="#1a6a6e"/>
<path d="M18 50 L24 44 L30 50 Z M47 50 L53 44 L59 50 Z M34 20 Q30 18 28 20 M43 20 Q47 18 49 20 M24 30 Q20 28 18 30 M53 30 Q57 28 59 30" stroke="#1a3a3a" stroke-width="1.4" fill="#1a6a6a"/>
<rect x="35" y="52" width="7" height="8" fill="#f8e070"/><rect x="31" y="36" width="3" height="4" fill="#f8e070"/><rect x="43" y="36" width="3" height="4" fill="#f8e070"/><rect x="37" y="26" width="3" height="4" fill="#f8e070"/>
<path d="M33 68 L36 60 H41 L44 68 Z" fill="#b8d890"/>
<path d="M3.5 62 Q12 56 20 62 Q28 58 34 66 V72.5 H3.5 Z M73.5 62 Q65 56 57 62 Q49 58 43 66 V72.5 H73.5 Z" fill="#1a5a5a"/>
<circle cx="12" cy="64" r="4" fill="none" stroke="#d86a1a" stroke-width="1.5"/><circle cx="62" cy="64" r="4" fill="none" stroke="#d86a1a" stroke-width="1.5"/>
<rect x="3.5" y="68" width="70" height="4.5" fill="#c85a18"/>
</svg>

<!-- left panel scrollbar -->
<div class="a" style="left:300px;top:83px;width:15px;height:758px;background:#f1f1f1"></div>
<div class="a" style="left:302px;top:96px;width:11px;height:248px;background:#c1c1c1"></div>

<!-- toolbar -->
<div class="a" style="left:316px;top:83px;width:948px;height:38px;background:#fff"></div>

<!-- toolbar content -->
<svg class="a" style="left:330px;top:96px" width="17" height="14" viewBox="0 0 17 14"><path d="M5 1.5 L1.8 4.6 L5 7.7" fill="none" stroke="#333" stroke-width="1.4" stroke-linejoin="round"/><path d="M2 4.6 H10.5 Q15 4.6 15 8.6 Q15 12.5 10.5 12.5 H6" fill="none" stroke="#333" stroke-width="1.4"/></svg>
<svg class="a" style="left:359px;top:96px" width="17" height="14" viewBox="0 0 17 14"><path d="M12 1.5 L15.2 4.6 L12 7.7" fill="none" stroke="#bbb" stroke-width="1.3" stroke-linejoin="round"/><path d="M15 4.6 H6.5 Q2 4.6 2 8.6 Q2 12.5 6.5 12.5 H11" fill="none" stroke="#bbb" stroke-width="1.3"/></svg>
<div class="a" style="left:388.5px;top:88px;width:1px;height:26px;background:#ededed"></div>
<div class="t lbl" style="left:401.5px;top:88px">Operation</div>
<div class="a" style="left:401px;top:100px;width:66px;height:14px;border:1px solid #e2e2e2;border-radius:2px"></div>
<div class="t" style="left:405.5px;top:103.5px;font-size:8px;color:#555">Basic Cut</div>
<svg class="a" style="left:458px;top:105px" width="6" height="4" viewBox="0 0 6 4"><path d="M0 0 H6 L3 4 Z" fill="#222"/></svg>
<div class="a" style="left:471.5px;top:100px;width:14px;height:14px;border:1px solid #e2e2e2;border-radius:2px"></div>
<div class="t" style="left:471.5px;top:103.5px;width:14px;text-align:center;font-size:7.5px;color:#aaa">?</div>
<div class="a" style="left:497px;top:88px;width:1px;height:26px;background:#ededed"></div>

<div class="t lbl" style="left:506px;top:88px;width:42px;text-align:center">Deselect</div>
<svg class="a" style="left:519px;top:100px" width="16" height="16" viewBox="0 0 16 16"><rect x="1.5" y="1.5" width="13" height="13" rx="3" fill="none" stroke="#333" stroke-width="1.2" stroke-dasharray="2 1.6"/><circle cx="5.5" cy="6" r="1.3" fill="none" stroke="#333" stroke-width="1"/><circle cx="10" cy="6" r="1.3" fill="none" stroke="#333" stroke-width="1"/><circle cx="5.5" cy="10.5" r="1.3" fill="none" stroke="#333" stroke-width="1"/><path d="M9 9 L13 11 L11 12 L10.5 14 Z" fill="#333"/></svg>
<div class="t lbl" style="left:552px;top:88px;width:28px;text-align:center">Edit</div>
<svg class="a" style="left:556px;top:100px" width="15" height="15" viewBox="0 0 15 15"><path d="M2 13 L2.8 9.6 L10.8 1.6 Q11.8 0.8 12.8 1.6 L13.4 2.2 Q14.2 3.2 13.4 4.2 L5.4 12.2 Z M9.6 2.8 L12.2 5.4" fill="none" stroke="#333" stroke-width="1.2" stroke-linejoin="round"/></svg>
<svg class="a" style="left:572.5px;top:106.5px" width="5" height="3.5" viewBox="0 0 5 3.5"><path d="M0 0 H5 L2.5 3.5 Z" fill="#222"/></svg>
<div class="a" style="left:588px;top:88px;width:1px;height:26px;background:#ededed"></div>

<div class="t lbl" style="left:590px;top:88px;width:30px;text-align:center;color:#c4c4c4">Align</div>
<svg class="a" style="left:596px;top:102px" width="22" height="12" viewBox="0 0 22 12"><path d="M1.5 1 V11" stroke="#ccc" stroke-width="1.1"/><rect x="4" y="3.5" width="8.5" height="5" rx="1" fill="none" stroke="#ccc" stroke-width="1.1"/><path d="M17 5 H21 L19 7.5 Z" fill="#ccc"/></svg>
<div class="t lbl" style="left:622px;top:88px;width:40px;text-align:center">Arrange</div>
<svg class="a" style="left:632px;top:101px" width="13" height="13" viewBox="0 0 13 13"><rect x="1" y="1" width="7" height="7" fill="none" stroke="#333" stroke-width="1.1"/><rect x="4.5" y="4.5" width="7" height="7" fill="#fff" stroke="#333" stroke-width="1.1"/></svg>
<svg class="a" style="left:647.5px;top:106.5px" width="5" height="3.5" viewBox="0 0 5 3.5"><path d="M0 0 H5 L2.5 3.5 Z" fill="#222"/></svg>
<div class="t lbl" style="left:670px;top:88px;width:28px;text-align:center">Flip</div>
<svg class="a" style="left:673px;top:100px" width="16" height="15" viewBox="0 0 16 15"><path d="M6.5 1 L1 14 H6.5 Z M9.5 1 L15 14 H9.5 Z" fill="none" stroke="#333" stroke-width="1.2" stroke-linejoin="round"/></svg>
<svg class="a" style="left:690.5px;top:106.5px" width="5" height="3.5" viewBox="0 0 5 3.5"><path d="M0 0 H5 L2.5 3.5 Z" fill="#222"/></svg>
<div class="a" style="left:707px;top:88px;width:1px;height:26px;background:#ededed"></div>

<div class="t lbl" style="left:714px;top:88px;width:32px;text-align:center">Offset</div>
<svg class="a" style="left:719px;top:100px" width="16" height="16" viewBox="0 0 16 16"><path d="M8 1.5 L14.5 6.2 L12 13.8 H4 L1.5 6.2 Z" fill="none" stroke="#333" stroke-width="1" stroke-dasharray="1.6 1.3"/><circle cx="8" cy="8.2" r="3.3" fill="none" stroke="#333" stroke-width="1.2"/></svg>
<svg class="a" style="left:736.5px;top:106.5px" width="5" height="3.5" viewBox="0 0 5 3.5"><path d="M0 0 H5 L2.5 3.5 Z" fill="#222"/></svg>
<div class="a" style="left:753px;top:88px;width:1px;height:26px;background:#ededed"></div>

<div class="t lbl" style="left:760px;top:88px;width:62px;text-align:center">Create Sticker</div>
<svg class="a" style="left:779px;top:100px" width="17" height="16" viewBox="0 0 17 16"><path d="M15 7.5 Q15 1.5 8.5 1.5 Q1.5 1.5 1.5 8.2 Q1.5 14.5 8 14.5 Z" fill="none" stroke="#333" stroke-width="1.3"/><path d="M8 14.5 Q8.5 8.5 15 7.5 Q10.5 7 8 14.5 Z" fill="none" stroke="#333" stroke-width="1.2"/></svg>
<svg class="a" style="left:798.5px;top:106.5px" width="5" height="3.5" viewBox="0 0 5 3.5"><path d="M0 0 H5 L2.5 3.5 Z" fill="#222"/></svg>
<div class="a" style="left:829px;top:88px;width:1px;height:26px;background:#ededed"></div>

<div class="t lbl" style="left:840px;top:88px;width:27px;text-align:center">Warp</div>
<svg class="a" style="left:841px;top:102px" width="17" height="12" viewBox="0 0 17 12"><path d="M1.5 1.5 Q8.5 3.5 15.5 1.5 V10.5 Q8.5 8.5 1.5 10.5 Z M5.5 2.5 V9.5 M11.5 2.5 V9.5 M1 1.5 H3 M1 10.5 H3 M14 1.5 H16 M14 10.5 H16" fill="none" stroke="#333" stroke-width="1.2"/></svg>
<svg class="a" style="left:860.5px;top:106.5px" width="5" height="3.5" viewBox="0 0 5 3.5"><path d="M0 0 H5 L2.5 3.5 Z" fill="#222"/></svg>
<div class="a" style="left:877.5px;top:88px;width:1px;height:26px;background:#ededed"></div>

<div class="t lbl" style="left:889px;top:88px">Size</div>
<div class="t" style="left:888.5px;top:103.5px;font-size:8px;color:#888">W</div>
<div class="a inp" style="left:900px;top:99.5px;width:44px"></div>
<div class="t" style="left:904.5px;top:103.5px;font-size:8px;color:#666">10</div>
<svg class="a spin" style="left:936px;top:101px" width="6" height="12" viewBox="0 0 6 12"><path d="M0.5 5 L3 1.5 L5.5 5 Z M0.5 7 L3 10.5 L5.5 7 Z" fill="#222"/></svg>
<svg class="a" style="left:945px;top:88px" width="22" height="13" viewBox="0 0 22 13"><path d="M1 9.5 H6 M16 9.5 H21" stroke="#ccc" stroke-width="1"/><rect x="7" y="5.5" width="8" height="7" rx="1" fill="none" stroke="#333" stroke-width="1.2"/><path d="M8.8 5.5 V3.5 Q8.8 1 11 1 Q13.2 1 13.2 3.5 V5.5" fill="none" stroke="#333" stroke-width="1.2"/><circle cx="11" cy="9" r=".8" fill="#333"/></svg>
<div class="t" style="left:955.5px;top:103.5px;font-size:8px;color:#888">H</div>
<div class="a inp" style="left:965px;top:99.5px;width:45px"></div>
<div class="t" style="left:969px;top:103.5px;font-size:8px;color:#666">7</div>
<svg class="a spin" style="left:1001.5px;top:101px" width="6" height="12" viewBox="0 0 6 12"><path d="M0.5 5 L3 1.5 L5.5 5 Z M0.5 7 L3 10.5 L5.5 7 Z" fill="#222"/></svg>
<div class="a" style="left:1020.5px;top:88px;width:1px;height:26px;background:#ededed"></div>

<div class="t lbl" style="left:1034px;top:88px">Rotate</div>
<svg class="a" style="left:1034px;top:101px" width="15" height="14" viewBox="0 0 15 14"><path d="M2 6.5 Q2.5 1.5 7.5 1.5 Q11 1.5 12.5 4.5 M13 7.5 Q12.5 12.5 7.5 12.5 Q4 12.5 2.5 9.5" fill="none" stroke="#333" stroke-width="1.3"/><path d="M13.5 1.5 V5.2 H9.8 M1.5 12.5 V8.8 H5.2" fill="none" stroke="#333" stroke-width="1.3"/></svg>
<div class="a inp" style="left:1053px;top:100.5px;width:43.5px"></div>
<div class="t" style="left:1058.5px;top:104.5px;font-size:8px;color:#666">0</div>
<svg class="a spin" style="left:1089px;top:102px" width="6" height="12" viewBox="0 0 6 12"><path d="M0.5 5 L3 1.5 L5.5 5 Z M0.5 7 L3 10.5 L5.5 7 Z" fill="#222"/></svg>
<div class="a" style="left:1108px;top:88px;width:1px;height:26px;background:#ededed"></div>

<div class="t lbl" style="left:1114px;top:88px">Position</div>
<div class="t" style="left:1114.5px;top:103.5px;font-size:8px;color:#888">X</div>
<div class="a inp" style="left:1124px;top:99.5px;width:43.5px"></div>
<div class="t" style="left:1127.5px;top:103.5px;font-size:8px;color:#666">0.5</div>
<svg class="a spin" style="left:1159.5px;top:101px" width="6" height="12" viewBox="0 0 6 12"><path d="M0.5 5 L3 1.5 L5.5 5 Z M0.5 7 L3 10.5 L5.5 7 Z" fill="#222"/></svg>
<div class="t" style="left:1175.5px;top:103.5px;font-size:8px;color:#888">Y</div>
<div class="a inp" style="left:1184.5px;top:99.5px;width:44px"></div>
<div class="t" style="left:1188.5px;top:103.5px;font-size:8px;color:#666">0.5</div>
<svg class="a spin" style="left:1220.5px;top:101px" width="6" height="12" viewBox="0 0 6 12"><path d="M0.5 5 L3 1.5 L5.5 5 Z M0.5 7 L3 10.5 L5.5 7 Z" fill="#222"/></svg>

<!-- rulers -->
<svg class="a" style="left:316px;top:120px" width="934" height="20" viewBox="316 120 934 20"><rect x="316" y="120" width="934" height="20" fill="#f4f4f4"/><rect x="316" y="120" width="934" height="1.3" fill="#d6d6d6"/><line x1="335.60" y1="121" x2="335.60" y2="140" stroke="#e4e4e4" stroke-width="1"/><line x1="342.67" y1="135" x2="342.67" y2="140" stroke="#e6e6e6" stroke-width="1"/><line x1="349.74" y1="135" x2="349.74" y2="140" stroke="#e6e6e6" stroke-width="1"/><line x1="356.81" y1="135" x2="356.81" y2="140" stroke="#e6e6e6" stroke-width="1"/><line x1="363.88" y1="129" x2="363.88" y2="140" stroke="#e8e8e8" stroke-width="1"/><line x1="370.94" y1="135" x2="370.94" y2="140" stroke="#e6e6e6" stroke-width="1"/><line x1="378.01" y1="135" x2="378.01" y2="140" stroke="#e6e6e6" stroke-width="1"/><line x1="385.08" y1="135" x2="385.08" y2="140" stroke="#e6e6e6" stroke-width="1"/><text x="339.10" y="131" font-family="Liberation Sans" font-size="9.5" fill="#6a6a6a">0</text><line x1="392.15" y1="121" x2="392.15" y2="140" stroke="#e4e4e4" stroke-width="1"/><line x1="399.22" y1="135" x2="399.22" y2="140" stroke="#e6e6e6" stroke-width="1"/><line x1="406.29" y1="135" x2="406.29" y2="140" stroke="#e6e6e6" stroke-width="1"/><line x1="413.36" y1="135" x2="413.36" y2="140" stroke="#e6e6e6" stroke-width="1"/><line x1="420.43" y1="129" x2="420.43" y2="140" stroke="#e8e8e8" stroke-width="1"/><line x1="427.49" y1="135" x2="427.49" y2="140" stroke="#e6e6e6" stroke-width="1"/><line x1="434.56" y1="135" x2="434.56" y2="140" stroke="#e6e6e6" stroke-width="1"/><line x1="441.63" y1="135" x2="441.63" y2="140" stroke="#e6e6e6" stroke-width="1"/><text x="395.65" y="131" font-family="Liberation Sans" font-size="9.5" fill="#6a6a6a">1</text><line x1="448.70" y1="121" x2="448.70" y2="140" stroke="#e4e4e4" stroke-width="1"/><line x1="455.77" y1="135" x2="455.77" y2="140" stroke="#e6e6e6" stroke-width="1"/><line x1="462.84" y1="135" x2="462.84" y2="140" stroke="#e6e6e6" stroke-width="1"/><line x1="469.91" y1="135" x2="469.91" y2="140" stroke="#e6e6e6" stroke-width="1"/><line x1="476.98" y1="129" x2="476.98" y2="140" stroke="#e8e8e8" stroke-width="1"/><line x1="484.04" y1="135" x2="484.04" y2="140" stroke="#e6e6e6" stroke-width="1"/><line x1="491.11" y1="135" x2="491.11" y2="140" stroke="#e6e6e6" stroke-width="1"/><line x1="498.18" y1="135" x2="498.18" y2="140" stroke="#e6e6e6" stroke-width="1"/><text x="452.20" y="131" font-family="Liberation Sans" font-size="9.5" fill="#6a6a6a">2</text><line x1="505.25" y1="121" x2="505.25" y2="140" stroke="#e4e4e4" stroke-width="1"/><line x1="512.32" y1="135" x2="512.32" y2="140" stroke="#e6e6e6" stroke-width="1"/><line x1="519.39" y1="135" x2="519.39" y2="140" stroke="#e6e6e6" stroke-width="1"/><line x1="526.46" y1="135" x2="526.46" y2="140" stroke="#e6e6e6" stroke-width="1"/><line x1="533.52" y1="129" x2="533.52" y2="140" stroke="#e8e8e8" stroke-width="1"/><line x1="540.59" y1="135" x2="540.59" y2="140" stroke="#e6e6e6" stroke-width="1"/><line x1="547.66" y1="135" x2="547.66" y2="140" stroke="#e6e6e6" stroke-width="1"/><line x1="554.73" y1="135" x2="554.73" y2="140" stroke="#e6e6e6" stroke-width="1"/><text x="508.75" y="131" font-family="Liberation Sans" font-size="9.5" fill="#6a6a6a">3</text><line x1="561.80" y1="121" x2="561.80" y2="140" stroke="#e4e4e4" stroke-width="1"/><line x1="568.87" y1="135" x2="568.87" y2="140" stroke="#e6e6e6" stroke-width="1"/><line x1="575.94" y1="135" x2="575.94" y2="140" stroke="#e6e6e6" stroke-width="1"/><line x1="583.01" y1="135" x2="583.01" y2="140" stroke="#e6e6e6" stroke-width="1"/><line x1="590.08" y1="129" x2="590.08" y2="140" stroke="#e8e8e8" stroke-width="1"/><line x1="597.14" y1="135" x2="597.14" y2="140" stroke="#e6e6e6" stroke-width="1"/><line x1="604.21" y1="135" x2="604.21" y2="140" stroke="#e6e6e6" stroke-width="1"/><line x1="611.28" y1="135" x2="611.28" y2="140" stroke="#e6e6e6" stroke-width="1"/><text x="565.30" y="131" font-family="Liberation Sans" font-size="9.5" fill="#6a6a6a">4</text><line x1="618.35" y1="121" x2="618.35" y2="140" stroke="#e4e4e4" stroke-width="1"/><line x1="625.42" y1="135" x2="625.42" y2="140" stroke="#e6e6e6" stroke-width="1"/><line x1="632.49" y1="135" x2="632.49" y2="140" stroke="#e6e6e6" stroke-width="1"/><line x1="639.56" y1="135" x2="639.56" y2="140" stroke="#e6e6e6" stroke-width="1"/><line x1="646.62" y1="129" x2="646.62" y2="140" stroke="#e8e8e8" stroke-width="1"/><line x1="653.69" y1="135" x2="653.69" y2="140" stroke="#e6e6e6" stroke-width="1"/><line x1="660.76" y1="135" x2="660.76" y2="140" stroke="#e6e6e6" stroke-width="1"/><line x1="667.83" y1="135" x2="667.83" y2="140" stroke="#e6e6e6" stroke-width="1"/><text x="621.85" y="131" font-family="Liberation Sans" font-size="9.5" fill="#6a6a6a">5</text><line x1="674.90" y1="121" x2="674.90" y2="140" stroke="#e4e4e4" stroke-width="1"/><line x1="681.97" y1="135" x2="681.97" y2="140" stroke="#e6e6e6" stroke-width="1"/><line x1="689.04" y1="135" x2="689.04" y2="140" stroke="#e6e6e6" stroke-width="1"/><line x1="696.11" y1="135" x2="696.11" y2="140" stroke="#e6e6e6" stroke-width="1"/><line x1="703.17" y1="129" x2="703.17" y2="140" stroke="#e8e8e8" stroke-width="1"/><line x1="710.24" y1="135" x2="710.24" y2="140" stroke="#e6e6e6" stroke-width="1"/><line x1="717.31" y1="135" x2="717.31" y2="140" stroke="#e6e6e6" stroke-width="1"/><line x1="724.38" y1="135" x2="724.38" y2="140" stroke="#e6e6e6" stroke-width="1"/><text x="678.40" y="131" font-family="Liberation Sans" font-size="9.5" fill="#6a6a6a">6</text><line x1="731.45" y1="121" x2="731.45" y2="140" stroke="#e4e4e4" stroke-width="1"/><line x1="738.52" y1="135" x2="738.52" y2="140" stroke="#e6e6e6" stroke-width="1"/><line x1="745.59" y1="135" x2="745.59" y2="140" stroke="#e6e6e6" stroke-width="1"/><line x1="752.66" y1="135" x2="752.66" y2="140" stroke="#e6e6e6" stroke-width="1"/><line x1="759.73" y1="129" x2="759.73" y2="140" stroke="#e8e8e8" stroke-width="1"/><line x1="766.79" y1="135" x2="766.79" y2="140" stroke="#e6e6e6" stroke-width="1"/><line x1="773.86" y1="135" x2="773.86" y2="140" stroke="#e6e6e6" stroke-width="1"/><line x1="780.93" y1="135" x2="780.93" y2="140" stroke="#e6e6e6" stroke-width="1"/><text x="734.95" y="131" font-family="Liberation Sans" font-size="9.5" fill="#6a6a6a">7</text><line x1="788.00" y1="121" x2="788.00" y2="140" stroke="#e4e4e4" stroke-width="1"/><line x1="795.07" y1="135" x2="795.07" y2="140" stroke="#e6e6e6" stroke-width="1"/><line x1="802.14" y1="135" x2="802.14" y2="140" stroke="#e6e6e6" stroke-width="1"/><line x1="809.21" y1="135" x2="809.21" y2="140" stroke="#e6e6e6" stroke-width="1"/><line x1="816.27" y1="129" x2="816.27" y2="140" stroke="#e8e8e8" stroke-width="1"/><line x1="823.34" y1="135" x2="823.34" y2="140" stroke="#e6e6e6" stroke-width="1"/><line x1="830.41" y1="135" x2="830.41" y2="140" stroke="#e6e6e6" stroke-width="1"/><line x1="837.48" y1="135" x2="837.48" y2="140" stroke="#e6e6e6" stroke-width="1"/><text x="791.50" y="131" font-family="Liberation Sans" font-size="9.5" fill="#6a6a6a">8</text><line x1="844.55" y1="121" x2="844.55" y2="140" stroke="#e4e4e4" stroke-width="1"/><line x1="851.62" y1="135" x2="851.62" y2="140" stroke="#e6e6e6" stroke-width="1"/><line x1="858.69" y1="135" x2="858.69" y2="140" stroke="#e6e6e6" stroke-width="1"/><line x1="865.76" y1="135" x2="865.76" y2="140" stroke="#e6e6e6" stroke-width="1"/><line x1="872.83" y1="129" x2="872.83" y2="140" stroke="#e8e8e8" stroke-width="1"/><line x1="879.89" y1="135" x2="879.89" y2="140" stroke="#e6e6e6" stroke-width="1"/><line x1="886.96" y1="135" x2="886.96" y2="140" stroke="#e6e6e6" stroke-width="1"/><line x1="894.03" y1="135" x2="894.03" y2="140" stroke="#e6e6e6" stroke-width="1"/><text x="848.05" y="131" font-family="Liberation Sans" font-size="9.5" fill="#6a6a6a">9</text><line x1="901.10" y1="121" x2="901.10" y2="140" stroke="#e4e4e4" stroke-width="1"/><line x1="908.17" y1="135" x2="908.17" y2="140" stroke="#e6e6e6" stroke-width="1"/><line x1="915.24" y1="135" x2="915.24" y2="140" stroke="#e6e6e6" stroke-width="1"/><line x1="922.31" y1="135" x2="922.31" y2="140" stroke="#e6e6e6" stroke-width="1"/><line x1="929.38" y1="129" x2="929.38" y2="140" stroke="#e8e8e8" stroke-width="1"/><line x1="936.44" y1="135" x2="936.44" y2="140" stroke="#e6e6e6" stroke-width="1"/><line x1="943.51" y1="135" x2="943.51" y2="140" stroke="#e6e6e6" stroke-width="1"/><line x1="950.58" y1="135" x2="950.58" y2="140" stroke="#e6e6e6" stroke-width="1"/><text x="904.60" y="131" font-family="Liberation Sans" font-size="9.5" fill="#6a6a6a">10</text><line x1="957.65" y1="121" x2="957.65" y2="140" stroke="#e4e4e4" stroke-width="1"/><line x1="964.72" y1="135" x2="964.72" y2="140" stroke="#e6e6e6" stroke-width="1"/><line x1="971.79" y1="135" x2="971.79" y2="140" stroke="#e6e6e6" stroke-width="1"/><line x1="978.86" y1="135" x2="978.86" y2="140" stroke="#e6e6e6" stroke-width="1"/><line x1="985.92" y1="129" x2="985.92" y2="140" stroke="#e8e8e8" stroke-width="1"/><line x1="992.99" y1="135" x2="992.99" y2="140" stroke="#e6e6e6" stroke-width="1"/><line x1="1000.06" y1="135" x2="1000.06" y2="140" stroke="#e6e6e6" stroke-width="1"/><line x1="1007.13" y1="135" x2="1007.13" y2="140" stroke="#e6e6e6" stroke-width="1"/><text x="961.15" y="131" font-family="Liberation Sans" font-size="9.5" fill="#6a6a6a">11</text><line x1="1014.20" y1="121" x2="1014.20" y2="140" stroke="#e4e4e4" stroke-width="1"/><line x1="1021.27" y1="135" x2="1021.27" y2="140" stroke="#e6e6e6" stroke-width="1"/><line x1="1028.34" y1="135" x2="1028.34" y2="140" stroke="#e6e6e6" stroke-width="1"/><line x1="1035.41" y1="135" x2="1035.41" y2="140" stroke="#e6e6e6" stroke-width="1"/><line x1="1042.47" y1="129" x2="1042.47" y2="140" stroke="#e8e8e8" stroke-width="1"/><line x1="1049.54" y1="135" x2="1049.54" y2="140" stroke="#e6e6e6" stroke-width="1"/><line x1="1056.61" y1="135" x2="1056.61" y2="140" stroke="#e6e6e6" stroke-width="1"/><line x1="1063.68" y1="135" x2="1063.68" y2="140" stroke="#e6e6e6" stroke-width="1"/><text x="1017.70" y="131" font-family="Liberation Sans" font-size="9.5" fill="#6a6a6a">12</text><line x1="1070.75" y1="121" x2="1070.75" y2="140" stroke="#e4e4e4" stroke-width="1"/><line x1="1077.82" y1="135" x2="1077.82" y2="140" stroke="#e6e6e6" stroke-width="1"/><line x1="1084.89" y1="135" x2="1084.89" y2="140" stroke="#e6e6e6" stroke-width="1"/><line x1="1091.96" y1="135" x2="1091.96" y2="140" stroke="#e6e6e6" stroke-width="1"/><line x1="1099.03" y1="129" x2="1099.03" y2="140" stroke="#e8e8e8" stroke-width="1"/><line x1="1106.09" y1="135" x2="1106.09" y2="140" stroke="#e6e6e6" stroke-width="1"/><line x1="1113.16" y1="135" x2="1113.16" y2="140" stroke="#e6e6e6" stroke-width="1"/><line x1="1120.23" y1="135" x2="1120.23" y2="140" stroke="#e6e6e6" stroke-width="1"/><text x="1074.25" y="131" font-family="Liberation Sans" font-size="9.5" fill="#6a6a6a">13</text><line x1="1127.30" y1="121" x2="1127.30" y2="140" stroke="#e4e4e4" stroke-width="1"/><line x1="1134.37" y1="135" x2="1134.37" y2="140" stroke="#e6e6e6" stroke-width="1"/><line x1="1141.44" y1="135" x2="1141.44" y2="140" stroke="#e6e6e6" stroke-width="1"/><line x1="1148.51" y1="135" x2="1148.51" y2="140" stroke="#e6e6e6" stroke-width="1"/><line x1="1155.57" y1="129" x2="1155.57" y2="140" stroke="#e8e8e8" stroke-width="1"/><line x1="1162.64" y1="135" x2="1162.64" y2="140" stroke="#e6e6e6" stroke-width="1"/><line x1="1169.71" y1="135" x2="1169.71" y2="140" stroke="#e6e6e6" stroke-width="1"/><line x1="1176.78" y1="135" x2="1176.78" y2="140" stroke="#e6e6e6" stroke-width="1"/><text x="1130.80" y="131" font-family="Liberation Sans" font-size="9.5" fill="#6a6a6a">14</text><line x1="1183.85" y1="121" x2="1183.85" y2="140" stroke="#e4e4e4" stroke-width="1"/><line x1="1190.92" y1="135" x2="1190.92" y2="140" stroke="#e6e6e6" stroke-width="1"/><line x1="1197.99" y1="135" x2="1197.99" y2="140" stroke="#e6e6e6" stroke-width="1"/><line x1="1205.06" y1="135" x2="1205.06" y2="140" stroke="#e6e6e6" stroke-width="1"/><line x1="1212.12" y1="129" x2="1212.12" y2="140" stroke="#e8e8e8" stroke-width="1"/><line x1="1219.19" y1="135" x2="1219.19" y2="140" stroke="#e6e6e6" stroke-width="1"/><line x1="1226.26" y1="135" x2="1226.26" y2="140" stroke="#e6e6e6" stroke-width="1"/><line x1="1233.33" y1="135" x2="1233.33" y2="140" stroke="#e6e6e6" stroke-width="1"/><text x="1187.35" y="131" font-family="Liberation Sans" font-size="9.5" fill="#6a6a6a">15</text><line x1="1240.40" y1="121" x2="1240.40" y2="140" stroke="#e4e4e4" stroke-width="1"/><line x1="1247.47" y1="135" x2="1247.47" y2="140" stroke="#e6e6e6" stroke-width="1"/><text x="1243.90" y="131" font-family="Liberation Sans" font-size="9.5" fill="#6a6a6a">16</text></svg>
<svg class="a" style="left:316px;top:140px" width="20" height="692" viewBox="316 140 20 692"><rect x="316" y="140" width="20" height="692" fill="#f4f4f4"/><line x1="316" y1="139.60" x2="336" y2="139.60" stroke="#e4e4e4" stroke-width="1"/><line x1="331" y1="146.67" x2="336" y2="146.67" stroke="#e6e6e6" stroke-width="1"/><line x1="331" y1="153.74" x2="336" y2="153.74" stroke="#e6e6e6" stroke-width="1"/><line x1="331" y1="160.81" x2="336" y2="160.81" stroke="#e6e6e6" stroke-width="1"/><line x1="325" y1="167.88" x2="336" y2="167.88" stroke="#e8e8e8" stroke-width="1"/><line x1="331" y1="174.94" x2="336" y2="174.94" stroke="#e6e6e6" stroke-width="1"/><line x1="331" y1="182.01" x2="336" y2="182.01" stroke="#e6e6e6" stroke-width="1"/><line x1="331" y1="189.08" x2="336" y2="189.08" stroke="#e6e6e6" stroke-width="1"/><text transform="translate(326.5,145.60) rotate(-90)" text-anchor="middle" font-family="Liberation Sans" font-size="9.5" fill="#6a6a6a">0</text><line x1="316" y1="196.15" x2="336" y2="196.15" stroke="#e4e4e4" stroke-width="1"/><line x1="331" y1="203.22" x2="336" y2="203.22" stroke="#e6e6e6" stroke-width="1"/><line x1="331" y1="210.29" x2="336" y2="210.29" stroke="#e6e6e6" stroke-width="1"/><line x1="331" y1="217.36" x2="336" y2="217.36" stroke="#e6e6e6" stroke-width="1"/><line x1="325" y1="224.42" x2="336" y2="224.42" stroke="#e8e8e8" stroke-width="1"/><line x1="331" y1="231.49" x2="336" y2="231.49" stroke="#e6e6e6" stroke-width="1"/><line x1="331" y1="238.56" x2="336" y2="238.56" stroke="#e6e6e6" stroke-width="1"/><line x1="331" y1="245.63" x2="336" y2="245.63" stroke="#e6e6e6" stroke-width="1"/><text transform="translate(326.5,202.15) rotate(-90)" text-anchor="middle" font-family="Liberation Sans" font-size="9.5" fill="#6a6a6a">1</text><line x1="316" y1="252.70" x2="336" y2="252.70" stroke="#e4e4e4" stroke-width="1"/><line x1="331" y1="259.77" x2="336" y2="259.77" stroke="#e6e6e6" stroke-width="1"/><line x1="331" y1="266.84" x2="336" y2="266.84" stroke="#e6e6e6" stroke-width="1"/><line x1="331" y1="273.91" x2="336" y2="273.91" stroke="#e6e6e6" stroke-width="1"/><line x1="325" y1="280.98" x2="336" y2="280.98" stroke="#e8e8e8" stroke-width="1"/><line x1="331" y1="288.04" x2="336" y2="288.04" stroke="#e6e6e6" stroke-width="1"/><line x1="331" y1="295.11" x2="336" y2="295.11" stroke="#e6e6e6" stroke-width="1"/><line x1="331" y1="302.18" x2="336" y2="302.18" stroke="#e6e6e6" stroke-width="1"/><text transform="translate(326.5,258.70) rotate(-90)" text-anchor="middle" font-family="Liberation Sans" font-size="9.5" fill="#6a6a6a">2</text><line x1="316" y1="309.25" x2="336" y2="309.25" stroke="#e4e4e4" stroke-width="1"/><line x1="331" y1="316.32" x2="336" y2="316.32" stroke="#e6e6e6" stroke-width="1"/><line x1="331" y1="323.39" x2="336" y2="323.39" stroke="#e6e6e6" stroke-width="1"/><line x1="331" y1="330.46" x2="336" y2="330.46" stroke="#e6e6e6" stroke-width="1"/><line x1="325" y1="337.52" x2="336" y2="337.52" stroke="#e8e8e8" stroke-width="1"/><line x1="331" y1="344.59" x2="336" y2="344.59" stroke="#e6e6e6" stroke-width="1"/><line x1="331" y1="351.66" x2="336" y2="351.66" stroke="#e6e6e6" stroke-width="1"/><line x1="331" y1="358.73" x2="336" y2="358.73" stroke="#e6e6e6" stroke-width="1"/><text transform="translate(326.5,315.25) rotate(-90)" text-anchor="middle" font-family="Liberation Sans" font-size="9.5" fill="#6a6a6a">3</text><line x1="316" y1="365.80" x2="336" y2="365.80" stroke="#e4e4e4" stroke-width="1"/><line x1="331" y1="372.87" x2="336" y2="372.87" stroke="#e6e6e6" stroke-width="1"/><line x1="331" y1="379.94" x2="336" y2="379.94" stroke="#e6e6e6" stroke-width="1"/><line x1="331" y1="387.01" x2="336" y2="387.01" stroke="#e6e6e6" stroke-width="1"/><line x1="325" y1="394.07" x2="336" y2="394.07" stroke="#e8e8e8" stroke-width="1"/><line x1="331" y1="401.14" x2="336" y2="401.14" stroke="#e6e6e6" stroke-width="1"/><line x1="331" y1="408.21" x2="336" y2="408.21" stroke="#e6e6e6" stroke-width="1"/><line x1="331" y1="415.28" x2="336" y2="415.28" stroke="#e6e6e6" stroke-width="1"/><text transform="translate(326.5,371.80) rotate(-90)" text-anchor="middle" font-family="Liberation Sans" font-size="9.5" fill="#6a6a6a">4</text><line x1="316" y1="422.35" x2="336" y2="422.35" stroke="#e4e4e4" stroke-width="1"/><line x1="331" y1="429.42" x2="336" y2="429.42" stroke="#e6e6e6" stroke-width="1"/><line x1="331" y1="436.49" x2="336" y2="436.49" stroke="#e6e6e6" stroke-width="1"/><line x1="331" y1="443.56" x2="336" y2="443.56" stroke="#e6e6e6" stroke-width="1"/><line x1="325" y1="450.62" x2="336" y2="450.62" stroke="#e8e8e8" stroke-width="1"/><line x1="331" y1="457.69" x2="336" y2="457.69" stroke="#e6e6e6" stroke-width="1"/><line x1="331" y1="464.76" x2="336" y2="464.76" stroke="#e6e6e6" stroke-width="1"/><line x1="331" y1="471.83" x2="336" y2="471.83" stroke="#e6e6e6" stroke-width="1"/><text transform="translate(326.5,428.35) rotate(-90)" text-anchor="middle" font-family="Liberation Sans" font-size="9.5" fill="#6a6a6a">5</text><line x1="316" y1="478.90" x2="336" y2="478.90" stroke="#e4e4e4" stroke-width="1"/><line x1="331" y1="485.97" x2="336" y2="485.97" stroke="#e6e6e6" stroke-width="1"/><line x1="331" y1="493.04" x2="336" y2="493.04" stroke="#e6e6e6" stroke-width="1"/><line x1="331" y1="500.11" x2="336" y2="500.11" stroke="#e6e6e6" stroke-width="1"/><line x1="325" y1="507.17" x2="336" y2="507.17" stroke="#e8e8e8" stroke-width="1"/><line x1="331" y1="514.24" x2="336" y2="514.24" stroke="#e6e6e6" stroke-width="1"/><line x1="331" y1="521.31" x2="336" y2="521.31" stroke="#e6e6e6" stroke-width="1"/><line x1="331" y1="528.38" x2="336" y2="528.38" stroke="#e6e6e6" stroke-width="1"/><text transform="translate(326.5,484.90) rotate(-90)" text-anchor="middle" font-family="Liberation Sans" font-size="9.5" fill="#6a6a6a">6</text><line x1="316" y1="535.45" x2="336" y2="535.45" stroke="#e4e4e4" stroke-width="1"/><line x1="331" y1="542.52" x2="336" y2="542.52" stroke="#e6e6e6" stroke-width="1"/><line x1="331" y1="549.59" x2="336" y2="549.59" stroke="#e6e6e6" stroke-width="1"/><line x1="331" y1="556.66" x2="336" y2="556.66" stroke="#e6e6e6" stroke-width="1"/><line x1="325" y1="563.73" x2="336" y2="563.73" stroke="#e8e8e8" stroke-width="1"/><line x1="331" y1="570.79" x2="336" y2="570.79" stroke="#e6e6e6" stroke-width="1"/><line x1="331" y1="577.86" x2="336" y2="577.86" stroke="#e6e6e6" stroke-width="1"/><line x1="331" y1="584.93" x2="336" y2="584.93" stroke="#e6e6e6" stroke-width="1"/><text transform="translate(326.5,541.45) rotate(-90)" text-anchor="middle" font-family="Liberation Sans" font-size="9.5" fill="#6a6a6a">7</text><line x1="316" y1="592.00" x2="336" y2="592.00" stroke="#e4e4e4" stroke-width="1"/><line x1="331" y1="599.07" x2="336" y2="599.07" stroke="#e6e6e6" stroke-width="1"/><line x1="331" y1="606.14" x2="336" y2="606.14" stroke="#e6e6e6" stroke-width="1"/><line x1="331" y1="613.21" x2="336" y2="613.21" stroke="#e6e6e6" stroke-width="1"/><line x1="325" y1="620.27" x2="336" y2="620.27" stroke="#e8e8e8" stroke-width="1"/><line x1="331" y1="627.34" x2="336" y2="627.34" stroke="#e6e6e6" stroke-width="1"/><line x1="331" y1="634.41" x2="336" y2="634.41" stroke="#e6e6e6" stroke-width="1"/><line x1="331" y1="641.48" x2="336" y2="641.48" stroke="#e6e6e6" stroke-width="1"/><text transform="translate(326.5,598.00) rotate(-90)" text-anchor="middle" font-family="Liberation Sans" font-size="9.5" fill="#6a6a6a">8</text><line x1="316" y1="648.55" x2="336" y2="648.55" stroke="#e4e4e4" stroke-width="1"/><line x1="331" y1="655.62" x2="336" y2="655.62" stroke="#e6e6e6" stroke-width="1"/><line x1="331" y1="662.69" x2="336" y2="662.69" stroke="#e6e6e6" stroke-width="1"/><line x1="331" y1="669.76" x2="336" y2="669.76" stroke="#e6e6e6" stroke-width="1"/><line x1="325" y1="676.83" x2="336" y2="676.83" stroke="#e8e8e8" stroke-width="1"/><line x1="331" y1="683.89" x2="336" y2="683.89" stroke="#e6e6e6" stroke-width="1"/><line x1="331" y1="690.96" x2="336" y2="690.96" stroke="#e6e6e6" stroke-width="1"/><line x1="331" y1="698.03" x2="336" y2="698.03" stroke="#e6e6e6" stroke-width="1"/><text transform="translate(326.5,654.55) rotate(-90)" text-anchor="middle" font-family="Liberation Sans" font-size="9.5" fill="#6a6a6a">9</text><line x1="316" y1="705.10" x2="336" y2="705.10" stroke="#e4e4e4" stroke-width="1"/><line x1="331" y1="712.17" x2="336" y2="712.17" stroke="#e6e6e6" stroke-width="1"/><line x1="331" y1="719.24" x2="336" y2="719.24" stroke="#e6e6e6" stroke-width="1"/><line x1="331" y1="726.31" x2="336" y2="726.31" stroke="#e6e6e6" stroke-width="1"/><line x1="325" y1="733.38" x2="336" y2="733.38" stroke="#e8e8e8" stroke-width="1"/><line x1="331" y1="740.44" x2="336" y2="740.44" stroke="#e6e6e6" stroke-width="1"/><line x1="331" y1="747.51" x2="336" y2="747.51" stroke="#e6e6e6" stroke-width="1"/><line x1="331" y1="754.58" x2="336" y2="754.58" stroke="#e6e6e6" stroke-width="1"/><text transform="translate(326.5,711.10) rotate(-90)" text-anchor="middle" font-family="Liberation Sans" font-size="9.5" fill="#6a6a6a">10</text><line x1="316" y1="761.65" x2="336" y2="761.65" stroke="#e4e4e4" stroke-width="1"/><line x1="331" y1="768.72" x2="336" y2="768.72" stroke="#e6e6e6" stroke-width="1"/><line x1="331" y1="775.79" x2="336" y2="775.79" stroke="#e6e6e6" stroke-width="1"/><line x1="331" y1="782.86" x2="336" y2="782.86" stroke="#e6e6e6" stroke-width="1"/><line x1="325" y1="789.92" x2="336" y2="789.92" stroke="#e8e8e8" stroke-width="1"/><line x1="331" y1="796.99" x2="336" y2="796.99" stroke="#e6e6e6" stroke-width="1"/><line x1="331" y1="804.06" x2="336" y2="804.06" stroke="#e6e6e6" stroke-width="1"/><line x1="331" y1="811.13" x2="336" y2="811.13" stroke="#e6e6e6" stroke-width="1"/><text transform="translate(326.5,767.65) rotate(-90)" text-anchor="middle" font-family="Liberation Sans" font-size="9.5" fill="#6a6a6a">11</text><line x1="316" y1="818.20" x2="336" y2="818.20" stroke="#e4e4e4" stroke-width="1"/><line x1="331" y1="825.27" x2="336" y2="825.27" stroke="#e6e6e6" stroke-width="1"/><text transform="translate(326.5,824.20) rotate(-90)" text-anchor="middle" font-family="Liberation Sans" font-size="9.5" fill="#6a6a6a">12</text></svg>
<!-- design -->
<svg class="a" style="left:0;top:0" width="1500" height="841" viewBox="0 0 1500 841">
<rect x="363.5" y="167.5" width="564.5" height="395" fill="#000"/>
<path d="M629.00,297.60 L628.94,298.11 L628.76,298.63 L628.47,299.13 L628.12,299.64 L627.72,300.14 L627.32,300.64 L626.96,301.13 L626.67,301.63 L626.47,302.13 L626.39,302.62 L626.43,303.13 L626.58,303.64 L626.83,304.16 L627.15,304.69 L627.50,305.22 L627.85,305.75 L628.16,306.28 L628.40,306.82 L628.53,307.34 L628.55,307.86 L628.45,308.36 L628.22,308.86 L627.90,309.34 L627.50,309.81 L627.06,310.28 L626.62,310.74 L626.21,311.20 L625.88,311.67 L625.64,312.15 L625.51,312.64 L625.51,313.14 L625.62,313.67 L625.82,314.20 L626.09,314.76 L626.39,315.31 L626.70,315.88 L626.96,316.44 L627.15,316.99 L627.24,317.52 L627.21,318.04 L627.06,318.53 L626.79,319.01 L626.43,319.46 L625.99,319.89 L625.51,320.32 L625.03,320.74 L624.59,321.16 L624.22,321.60 L623.94,322.06 L623.77,322.53 L623.72,323.04 L623.78,323.57 L623.93,324.12 L624.16,324.69 L624.41,325.28 L624.67,325.87 L624.88,326.45 L625.02,327.01 L625.06,327.55 L624.99,328.06 L624.80,328.54 L624.49,328.99 L624.09,329.41 L623.61,329.80 L623.10,330.19 L622.58,330.56 L622.11,330.95 L621.69,331.35 L621.38,331.78 L621.17,332.24 L621.07,332.74 L621.09,333.27 L621.19,333.84 L621.37,334.43 L621.57,335.03 L621.77,335.64 L621.93,336.23 L622.02,336.81 L622.02,337.35 L621.90,337.86 L621.67,338.32 L621.32,338.74 L620.88,339.12 L620.38,339.47 L619.83,339.81 L619.29,340.14 L618.78,340.48 L618.33,340.84 L617.98,341.24 L617.73,341.69 L617.59,342.17 L617.56,342.71 L617.62,343.28 L617.74,343.88 L617.89,344.50 L618.04,345.12 L618.14,345.73 L618.19,346.31 L618.13,346.85 L617.97,347.34 L617.70,347.78 L617.32,348.17 L616.85,348.51 L616.31,348.82 L615.74,349.10 L615.17,349.39 L614.63,349.68 L614.16,350.01 L613.77,350.38 L613.48,350.79 L613.30,351.27 L613.23,351.80 L613.23,352.37 L613.30,352.98 L613.39,353.61 L613.49,354.24 L613.54,354.86 L613.53,355.44 L613.43,355.97 L613.23,356.45 L612.92,356.86 L612.51,357.22 L612.01,357.52 L611.45,357.78 L610.85,358.01 L610.26,358.24 L609.70,358.49 L609.20,358.77 L608.78,359.11 L608.46,359.50 L608.24,359.95 L608.12,360.47 L608.07,361.05 L608.08,361.66 L608.12,362.30 L608.16,362.93 L608.16,363.55 L608.10,364.13 L607.96,364.65 L607.71,365.11 L607.37,365.49 L606.93,365.81 L606.40,366.07 L605.82,366.27 L605.21,366.46 L604.60,366.64 L604.02,366.84 L603.49,367.07 L603.05,367.37 L602.69,367.73 L602.44,368.16 L602.27,368.67 L602.17,369.24 L602.13,369.85 L602.12,370.49 L602.10,371.13 L602.05,371.74 L601.94,372.31 L601.75,372.82 L601.46,373.26 L601.09,373.61 L600.62,373.88 L600.08,374.09 L599.48,374.25 L598.85,374.38 L598.23,374.51 L597.63,374.65 L597.09,374.84 L596.62,375.10 L596.23,375.43 L595.94,375.84 L595.73,376.33 L595.58,376.89 L595.49,377.49 L595.42,378.13 L595.34,378.76 L595.24,379.37 L595.08,379.93 L594.85,380.42 L594.53,380.83 L594.12,381.15 L593.63,381.38 L593.07,381.54 L592.46,381.64 L591.83,381.72 L591.19,381.79 L590.59,381.88 L590.03,382.03 L589.54,382.24 L589.13,382.53 L588.80,382.92 L588.54,383.39 L588.35,383.93 L588.21,384.53 L588.08,385.15 L587.95,385.78 L587.79,386.38 L587.58,386.92 L587.31,387.39 L586.96,387.76 L586.52,388.05 L586.01,388.24 L585.44,388.35 L584.83,388.40 L584.19,388.42 L583.55,388.43 L582.94,388.47 L582.37,388.57 L581.86,388.74 L581.43,388.99 L581.07,389.35 L580.77,389.79 L580.54,390.32 L580.34,390.90 L580.16,391.51 L579.97,392.12 L579.77,392.70 L579.51,393.23 L579.19,393.67 L578.81,394.01 L578.35,394.26 L577.83,394.40 L577.25,394.46 L576.63,394.46 L576.00,394.42 L575.36,394.38 L574.75,394.37 L574.17,394.42 L573.65,394.54 L573.20,394.76 L572.81,395.08 L572.47,395.50 L572.19,396.00 L571.94,396.56 L571.71,397.15 L571.48,397.75 L571.22,398.31 L570.92,398.81 L570.56,399.22 L570.15,399.53 L569.67,399.73 L569.14,399.83 L568.56,399.84 L567.94,399.79 L567.31,399.69 L566.68,399.60 L566.07,399.53 L565.50,399.53 L564.97,399.60 L564.49,399.78 L564.08,400.07 L563.71,400.46 L563.38,400.93 L563.09,401.47 L562.80,402.04 L562.52,402.61 L562.21,403.15 L561.87,403.62 L561.48,404.00 L561.04,404.27 L560.55,404.43 L560.01,404.49 L559.43,404.44 L558.82,404.34 L558.20,404.19 L557.58,404.04 L556.98,403.92 L556.41,403.86 L555.87,403.89 L555.39,404.03 L554.94,404.28 L554.54,404.63 L554.18,405.08 L553.84,405.59 L553.51,406.13 L553.17,406.68 L552.82,407.18 L552.44,407.62 L552.02,407.97 L551.56,408.20 L551.05,408.32 L550.51,408.32 L549.93,408.23 L549.34,408.07 L548.73,407.87 L548.13,407.67 L547.54,407.49 L546.97,407.39 L546.44,407.37 L545.94,407.47 L545.48,407.68 L545.05,407.99 L544.65,408.41 L544.26,408.88 L543.89,409.40 L543.50,409.91 L543.11,410.39 L542.69,410.79 L542.24,411.10 L541.76,411.29 L541.25,411.36 L540.71,411.32 L540.15,411.18 L539.57,410.97 L538.98,410.71 L538.39,410.46 L537.82,410.23 L537.27,410.08 L536.74,410.02 L536.23,410.07 L535.76,410.24 L535.30,410.52 L534.86,410.89 L534.44,411.33 L534.02,411.81 L533.59,412.29 L533.16,412.73 L532.71,413.09 L532.23,413.36 L531.74,413.51 L531.22,413.54 L530.69,413.45 L530.14,413.26 L529.58,413.00 L529.01,412.69 L528.46,412.39 L527.90,412.12 L527.37,411.92 L526.84,411.81 L526.34,411.81 L525.85,411.94 L525.37,412.18 L524.90,412.51 L524.44,412.92 L523.98,413.36 L523.51,413.80 L523.04,414.20 L522.56,414.52 L522.06,414.75 L521.56,414.85 L521.04,414.83 L520.52,414.70 L519.98,414.46 L519.45,414.15 L518.92,413.80 L518.39,413.45 L517.86,413.13 L517.34,412.88 L516.83,412.73 L516.32,412.69 L515.83,412.77 L515.33,412.97 L514.83,413.26 L514.34,413.62 L513.84,414.02 L513.34,414.42 L512.83,414.77 L512.33,415.06 L511.81,415.24 L511.30,415.30 L510.79,415.24 L510.27,415.06 L509.77,414.77 L509.26,414.42 L508.76,414.02 L508.26,413.62 L507.77,413.26 L507.27,412.97 L506.77,412.77 L506.28,412.69 L505.77,412.73 L505.26,412.88 L504.74,413.13 L504.21,413.45 L503.68,413.80 L503.15,414.15 L502.62,414.46 L502.08,414.70 L501.56,414.83 L501.04,414.85 L500.54,414.75 L500.04,414.52 L499.56,414.20 L499.09,413.80 L498.62,413.36 L498.16,412.92 L497.70,412.51 L497.23,412.18 L496.75,411.94 L496.26,411.81 L495.76,411.81 L495.23,411.92 L494.70,412.12 L494.14,412.39 L493.59,412.69 L493.02,413.00 L492.46,413.26 L491.91,413.45 L491.38,413.54 L490.86,413.51 L490.37,413.36 L489.89,413.09 L489.44,412.73 L489.01,412.29 L488.58,411.81 L488.16,411.33 L487.74,410.89 L487.30,410.52 L486.84,410.24 L486.37,410.07 L485.86,410.02 L485.33,410.08 L484.78,410.23 L484.21,410.46 L483.62,410.71 L483.03,410.97 L482.45,411.18 L481.89,411.32 L481.35,411.36 L480.84,411.29 L480.36,411.10 L479.91,410.79 L479.49,410.39 L479.10,409.91 L478.71,409.40 L478.34,408.88 L477.95,408.41 L477.55,407.99 L477.12,407.68 L476.66,407.47 L476.16,407.37 L475.63,407.39 L475.06,407.49 L474.47,407.67 L473.87,407.87 L473.26,408.07 L472.67,408.23 L472.09,408.32 L471.55,408.32 L471.04,408.20 L470.58,407.97 L470.16,407.62 L469.78,407.18 L469.43,406.68 L469.09,406.13 L468.76,405.59 L468.42,405.08 L468.06,404.63 L467.66,404.28 L467.21,404.03 L466.73,403.89 L466.19,403.86 L465.62,403.92 L465.02,404.04 L464.40,404.19 L463.78,404.34 L463.17,404.44 L462.59,404.49 L462.05,404.43 L461.56,404.27 L461.12,404.00 L460.73,403.62 L460.39,403.15 L460.08,402.61 L459.80,402.04 L459.51,401.47 L459.22,400.93 L458.89,400.46 L458.52,400.07 L458.11,399.78 L457.63,399.60 L457.10,399.53 L456.53,399.53 L455.92,399.60 L455.29,399.69 L454.66,399.79 L454.04,399.84 L453.46,399.83 L452.93,399.73 L452.45,399.53 L452.04,399.22 L451.68,398.81 L451.38,398.31 L451.12,397.75 L450.89,397.15 L450.66,396.56 L450.41,396.00 L450.13,395.50 L449.79,395.08 L449.40,394.76 L448.95,394.54 L448.43,394.42 L447.85,394.37 L447.24,394.38 L446.60,394.42 L445.97,394.46 L445.35,394.46 L444.77,394.40 L444.25,394.26 L443.79,394.01 L443.41,393.67 L443.09,393.23 L442.83,392.70 L442.63,392.12 L442.44,391.51 L442.26,390.90 L442.06,390.32 L441.83,389.79 L441.53,389.35 L441.17,388.99 L440.74,388.74 L440.23,388.57 L439.66,388.47 L439.05,388.43 L438.41,388.42 L437.77,388.40 L437.16,388.35 L436.59,388.24 L436.08,388.05 L435.64,387.76 L435.29,387.39 L435.02,386.92 L434.81,386.38 L434.65,385.78 L434.52,385.15 L434.39,384.53 L434.25,383.93 L434.06,383.39 L433.80,382.92 L433.47,382.53 L433.06,382.24 L432.57,382.03 L432.01,381.88 L431.41,381.79 L430.77,381.72 L430.14,381.64 L429.53,381.54 L428.97,381.38 L428.48,381.15 L428.07,380.83 L427.75,380.42 L427.52,379.93 L427.36,379.37 L427.26,378.76 L427.18,378.13 L427.11,377.49 L427.02,376.89 L426.87,376.33 L426.66,375.84 L426.37,375.43 L425.98,375.10 L425.51,374.84 L424.97,374.65 L424.37,374.51 L423.75,374.38 L423.12,374.25 L422.52,374.09 L421.98,373.88 L421.51,373.61 L421.14,373.26 L420.85,372.82 L420.66,372.31 L420.55,371.74 L420.50,371.13 L420.48,370.49 L420.47,369.85 L420.43,369.24 L420.33,368.67 L420.16,368.16 L419.91,367.73 L419.55,367.37 L419.11,367.07 L418.58,366.84 L418.00,366.64 L417.39,366.46 L416.78,366.27 L416.20,366.07 L415.67,365.81 L415.23,365.49 L414.89,365.11 L414.64,364.65 L414.50,364.13 L414.44,363.55 L414.44,362.93 L414.48,362.30 L414.52,361.66 L414.53,361.05 L414.48,360.47 L414.36,359.95 L414.14,359.50 L413.82,359.11 L413.40,358.77 L412.90,358.49 L412.34,358.24 L411.75,358.01 L411.15,357.78 L410.59,357.52 L410.09,357.22 L409.68,356.86 L409.37,356.45 L409.17,355.97 L409.07,355.44 L409.06,354.86 L409.11,354.24 L409.21,353.61 L409.30,352.98 L409.37,352.37 L409.37,351.80 L409.30,351.27 L409.12,350.79 L408.83,350.38 L408.44,350.01 L407.97,349.68 L407.43,349.39 L406.86,349.10 L406.29,348.82 L405.75,348.51 L405.28,348.17 L404.90,347.78 L404.63,347.34 L404.47,346.85 L404.41,346.31 L404.46,345.73 L404.56,345.12 L404.71,344.50 L404.86,343.88 L404.98,343.28 L405.04,342.71 L405.01,342.17 L404.87,341.69 L404.62,341.24 L404.27,340.84 L403.82,340.48 L403.31,340.14 L402.77,339.81 L402.22,339.47 L401.72,339.12 L401.28,338.74 L400.93,338.32 L400.70,337.86 L400.58,337.35 L400.58,336.81 L400.67,336.23 L400.83,335.64 L401.03,335.03 L401.23,334.43 L401.41,333.84 L401.51,333.27 L401.53,332.74 L401.43,332.24 L401.22,331.78 L400.91,331.35 L400.49,330.95 L400.02,330.56 L399.50,330.19 L398.99,329.80 L398.51,329.41 L398.11,328.99 L397.80,328.54 L397.61,328.06 L397.54,327.55 L397.58,327.01 L397.72,326.45 L397.93,325.87 L398.19,325.28 L398.44,324.69 L398.67,324.12 L398.82,323.57 L398.88,323.04 L398.83,322.53 L398.66,322.06 L398.38,321.60 L398.01,321.16 L397.57,320.74 L397.09,320.32 L396.61,319.89 L396.17,319.46 L395.81,319.01 L395.54,318.53 L395.39,318.04 L395.36,317.52 L395.45,316.99 L395.64,316.44 L395.90,315.88 L396.21,315.31 L396.51,314.76 L396.78,314.20 L396.98,313.67 L397.09,313.14 L397.09,312.64 L396.96,312.15 L396.72,311.67 L396.39,311.20 L395.98,310.74 L395.54,310.28 L395.10,309.81 L394.70,309.34 L394.38,308.86 L394.15,308.36 L394.05,307.86 L394.07,307.34 L394.20,306.82 L394.44,306.28 L394.75,305.75 L395.10,305.22 L395.45,304.69 L395.77,304.16 L396.02,303.64 L396.17,303.13 L396.21,302.62 L396.13,302.13 L395.93,301.63 L395.64,301.13 L395.28,300.64 L394.88,300.14 L394.48,299.64 L394.13,299.13 L393.84,298.63 L393.66,298.11 L393.60,297.60 L393.66,297.09 L393.84,296.57 L394.13,296.07 L394.48,295.56 L394.88,295.06 L395.28,294.56 L395.64,294.07 L395.93,293.57 L396.13,293.07 L396.21,292.58 L396.17,292.07 L396.02,291.56 L395.77,291.04 L395.45,290.51 L395.10,289.98 L394.75,289.45 L394.44,288.92 L394.20,288.38 L394.07,287.86 L394.05,287.34 L394.15,286.84 L394.38,286.34 L394.70,285.86 L395.10,285.39 L395.54,284.92 L395.98,284.46 L396.39,284.00 L396.72,283.53 L396.96,283.05 L397.09,282.56 L397.09,282.06 L396.98,281.53 L396.78,281.00 L396.51,280.44 L396.21,279.89 L395.90,279.32 L395.64,278.76 L395.45,278.21 L395.36,277.68 L395.39,277.16 L395.54,276.67 L395.81,276.19 L396.17,275.74 L396.61,275.31 L397.09,274.88 L397.57,274.46 L398.01,274.04 L398.38,273.60 L398.66,273.14 L398.83,272.67 L398.88,272.16 L398.82,271.63 L398.67,271.08 L398.44,270.51 L398.19,269.92 L397.93,269.33 L397.72,268.75 L397.58,268.19 L397.54,267.65 L397.61,267.14 L397.80,266.66 L398.11,266.21 L398.51,265.79 L398.99,265.40 L399.50,265.01 L400.02,264.64 L400.49,264.25 L400.91,263.85 L401.22,263.42 L401.43,262.96 L401.53,262.46 L401.51,261.93 L401.41,261.36 L401.23,260.77 L401.03,260.17 L400.83,259.56 L400.67,258.97 L400.58,258.39 L400.58,257.85 L400.70,257.34 L400.93,256.88 L401.28,256.46 L401.72,256.08 L402.22,255.73 L402.77,255.39 L403.31,255.06 L403.82,254.72 L404.27,254.36 L404.62,253.96 L404.87,253.51 L405.01,253.03 L405.04,252.49 L404.98,251.92 L404.86,251.32 L404.71,250.70 L404.56,250.08 L404.46,249.47 L404.41,248.89 L404.47,248.35 L404.63,247.86 L404.90,247.42 L405.28,247.03 L405.75,246.69 L406.29,246.38 L406.86,246.10 L407.43,245.81 L407.97,245.52 L408.44,245.19 L408.83,244.82 L409.12,244.41 L409.30,243.93 L409.37,243.40 L409.37,242.83 L409.30,242.22 L409.21,241.59 L409.11,240.96 L409.06,240.34 L409.07,239.76 L409.17,239.23 L409.37,238.75 L409.68,238.34 L410.09,237.98 L410.59,237.68 L411.15,237.42 L411.75,237.19 L412.34,236.96 L412.90,236.71 L413.40,236.43 L413.82,236.09 L414.14,235.70 L414.36,235.25 L414.48,234.73 L414.53,234.15 L414.52,233.54 L414.48,232.90 L414.44,232.27 L414.44,231.65 L414.50,231.07 L414.64,230.55 L414.89,230.09 L415.23,229.71 L415.67,229.39 L416.20,229.13 L416.78,228.93 L417.39,228.74 L418.00,228.56 L418.58,228.36 L419.11,228.13 L419.55,227.83 L419.91,227.47 L420.16,227.04 L420.33,226.53 L420.43,225.96 L420.47,225.35 L420.48,224.71 L420.50,224.07 L420.55,223.46 L420.66,222.89 L420.85,222.38 L421.14,221.94 L421.51,221.59 L421.98,221.32 L422.52,221.11 L423.12,220.95 L423.75,220.82 L424.37,220.69 L424.97,220.55 L425.51,220.36 L425.98,220.10 L426.37,219.77 L426.66,219.36 L426.87,218.87 L427.02,218.31 L427.11,217.71 L427.18,217.07 L427.26,216.44 L427.36,215.83 L427.52,215.27 L427.75,214.78 L428.07,214.37 L428.48,214.05 L428.97,213.82 L429.53,213.66 L430.14,213.56 L430.77,213.48 L431.41,213.41 L432.01,213.32 L432.57,213.17 L433.06,212.96 L433.47,212.67 L433.80,212.28 L434.06,211.81 L434.25,211.27 L434.39,210.67 L434.52,210.05 L434.65,209.42 L434.81,208.82 L435.02,208.28 L435.29,207.81 L435.64,207.44 L436.08,207.15 L436.59,206.96 L437.16,206.85 L437.77,206.80 L438.41,206.78 L439.05,206.77 L439.66,206.73 L440.23,206.63 L440.74,206.46 L441.17,206.21 L441.53,205.85 L441.83,205.41 L442.06,204.88 L442.26,204.30 L442.44,203.69 L442.63,203.08 L442.83,202.50 L443.09,201.97 L443.41,201.53 L443.79,201.19 L444.25,200.94 L444.77,200.80 L445.35,200.74 L445.97,200.74 L446.60,200.78 L447.24,200.82 L447.85,200.83 L448.43,200.78 L448.95,200.66 L449.40,200.44 L449.79,200.12 L450.13,199.70 L450.41,199.20 L450.66,198.64 L450.89,198.05 L451.12,197.45 L451.38,196.89 L451.68,196.39 L452.04,195.98 L452.45,195.67 L452.93,195.47 L453.46,195.37 L454.04,195.36 L454.66,195.41 L455.29,195.51 L455.92,195.60 L456.53,195.67 L457.10,195.67 L457.63,195.60 L458.11,195.42 L458.52,195.13 L458.89,194.74 L459.22,194.27 L459.51,193.73 L459.80,193.16 L460.08,192.59 L460.39,192.05 L460.73,191.58 L461.12,191.20 L461.56,190.93 L462.05,190.77 L462.59,190.71 L463.17,190.76 L463.78,190.86 L464.40,191.01 L465.02,191.16 L465.62,191.28 L466.19,191.34 L466.73,191.31 L467.21,191.17 L467.66,190.92 L468.06,190.57 L468.42,190.12 L468.76,189.61 L469.09,189.07 L469.43,188.52 L469.78,188.02 L470.16,187.58 L470.58,187.23 L471.04,187.00 L471.55,186.88 L472.09,186.88 L472.67,186.97 L473.26,187.13 L473.87,187.33 L474.47,187.53 L475.06,187.71 L475.63,187.81 L476.16,187.83 L476.66,187.73 L477.12,187.52 L477.55,187.21 L477.95,186.79 L478.34,186.32 L478.71,185.80 L479.10,185.29 L479.49,184.81 L479.91,184.41 L480.36,184.10 L480.84,183.91 L481.35,183.84 L481.89,183.88 L482.45,184.02 L483.03,184.23 L483.62,184.49 L484.21,184.74 L484.78,184.97 L485.33,185.12 L485.86,185.18 L486.37,185.13 L486.84,184.96 L487.30,184.68 L487.74,184.31 L488.16,183.87 L488.58,183.39 L489.01,182.91 L489.44,182.47 L489.89,182.11 L490.37,181.84 L490.86,181.69 L491.38,181.66 L491.91,181.75 L492.46,181.94 L493.02,182.20 L493.59,182.51 L494.14,182.81 L494.70,183.08 L495.23,183.28 L495.76,183.39 L496.26,183.39 L496.75,183.26 L497.23,183.02 L497.70,182.69 L498.16,182.28 L498.62,181.84 L499.09,181.40 L499.56,181.00 L500.04,180.68 L500.54,180.45 L501.04,180.35 L501.56,180.37 L502.08,180.50 L502.62,180.74 L503.15,181.05 L503.68,181.40 L504.21,181.75 L504.74,182.07 L505.26,182.32 L505.77,182.47 L506.28,182.51 L506.77,182.43 L507.27,182.23 L507.77,181.94 L508.26,181.58 L508.76,181.18 L509.26,180.78 L509.77,180.43 L510.27,180.14 L510.79,179.96 L511.30,179.90 L511.81,179.96 L512.33,180.14 L512.83,180.43 L513.34,180.78 L513.84,181.18 L514.34,181.58 L514.83,181.94 L515.33,182.23 L515.83,182.43 L516.32,182.51 L516.83,182.47 L517.34,182.32 L517.86,182.07 L518.39,181.75 L518.92,181.40 L519.45,181.05 L519.98,180.74 L520.52,180.50 L521.04,180.37 L521.56,180.35 L522.06,180.45 L522.56,180.68 L523.04,181.00 L523.51,181.40 L523.98,181.84 L524.44,182.28 L524.90,182.69 L525.37,183.02 L525.85,183.26 L526.34,183.39 L526.84,183.39 L527.37,183.28 L527.90,183.08 L528.46,182.81 L529.01,182.51 L529.58,182.20 L530.14,181.94 L530.69,181.75 L531.22,181.66 L531.74,181.69 L532.23,181.84 L532.71,182.11 L533.16,182.47 L533.59,182.91 L534.02,183.39 L534.44,183.87 L534.86,184.31 L535.30,184.68 L535.76,184.96 L536.23,185.13 L536.74,185.18 L537.27,185.12 L537.82,184.97 L538.39,184.74 L538.98,184.49 L539.57,184.23 L540.15,184.02 L540.71,183.88 L541.25,183.84 L541.76,183.91 L542.24,184.10 L542.69,184.41 L543.11,184.81 L543.50,185.29 L543.89,185.80 L544.26,186.32 L544.65,186.79 L545.05,187.21 L545.48,187.52 L545.94,187.73 L546.44,187.83 L546.97,187.81 L547.54,187.71 L548.13,187.53 L548.73,187.33 L549.34,187.13 L549.93,186.97 L550.51,186.88 L551.05,186.88 L551.56,187.00 L552.02,187.23 L552.44,187.58 L552.82,188.02 L553.17,188.52 L553.51,189.07 L553.84,189.61 L554.18,190.12 L554.54,190.57 L554.94,190.92 L555.39,191.17 L555.87,191.31 L556.41,191.34 L556.98,191.28 L557.58,191.16 L558.20,191.01 L558.82,190.86 L559.43,190.76 L560.01,190.71 L560.55,190.77 L561.04,190.93 L561.48,191.20 L561.87,191.58 L562.21,192.05 L562.52,192.59 L562.80,193.16 L563.09,193.73 L563.38,194.27 L563.71,194.74 L564.08,195.13 L564.49,195.42 L564.97,195.60 L565.50,195.67 L566.07,195.67 L566.68,195.60 L567.31,195.51 L567.94,195.41 L568.56,195.36 L569.14,195.37 L569.67,195.47 L570.15,195.67 L570.56,195.98 L570.92,196.39 L571.22,196.89 L571.48,197.45 L571.71,198.05 L571.94,198.64 L572.19,199.20 L572.47,199.70 L572.81,200.12 L573.20,200.44 L573.65,200.66 L574.17,200.78 L574.75,200.83 L575.36,200.82 L576.00,200.78 L576.63,200.74 L577.25,200.74 L577.83,200.80 L578.35,200.94 L578.81,201.19 L579.19,201.53 L579.51,201.97 L579.77,202.50 L579.97,203.08 L580.16,203.69 L580.34,204.30 L580.54,204.88 L580.77,205.41 L581.07,205.85 L581.43,206.21 L581.86,206.46 L582.37,206.63 L582.94,206.73 L583.55,206.77 L584.19,206.78 L584.83,206.80 L585.44,206.85 L586.01,206.96 L586.52,207.15 L586.96,207.44 L587.31,207.81 L587.58,208.28 L587.79,208.82 L587.95,209.42 L588.08,210.05 L588.21,210.67 L588.35,211.27 L588.54,211.81 L588.80,212.28 L589.13,212.67 L589.54,212.96 L590.03,213.17 L590.59,213.32 L591.19,213.41 L591.83,213.48 L592.46,213.56 L593.07,213.66 L593.63,213.82 L594.12,214.05 L594.53,214.37 L594.85,214.78 L595.08,215.27 L595.24,215.83 L595.34,216.44 L595.42,217.07 L595.49,217.71 L595.58,218.31 L595.73,218.87 L595.94,219.36 L596.23,219.77 L596.62,220.10 L597.09,220.36 L597.63,220.55 L598.23,220.69 L598.85,220.82 L599.48,220.95 L600.08,221.11 L600.62,221.32 L601.09,221.59 L601.46,221.94 L601.75,222.38 L601.94,222.89 L602.05,223.46 L602.10,224.07 L602.12,224.71 L602.13,225.35 L602.17,225.96 L602.27,226.53 L602.44,227.04 L602.69,227.47 L603.05,227.83 L603.49,228.13 L604.02,228.36 L604.60,228.56 L605.21,228.74 L605.82,228.93 L606.40,229.13 L606.93,229.39 L607.37,229.71 L607.71,230.09 L607.96,230.55 L608.10,231.07 L608.16,231.65 L608.16,232.27 L608.12,232.90 L608.08,233.54 L608.07,234.15 L608.12,234.73 L608.24,235.25 L608.46,235.70 L608.78,236.09 L609.20,236.43 L609.70,236.71 L610.26,236.96 L610.85,237.19 L611.45,237.42 L612.01,237.68 L612.51,237.98 L612.92,238.34 L613.23,238.75 L613.43,239.23 L613.53,239.76 L613.54,240.34 L613.49,240.96 L613.39,241.59 L613.30,242.22 L613.23,242.83 L613.23,243.40 L613.30,243.93 L613.48,244.41 L613.77,244.82 L614.16,245.19 L614.63,245.52 L615.17,245.81 L615.74,246.10 L616.31,246.38 L616.85,246.69 L617.32,247.03 L617.70,247.42 L617.97,247.86 L618.13,248.35 L618.19,248.89 L618.14,249.47 L618.04,250.08 L617.89,250.70 L617.74,251.32 L617.62,251.92 L617.56,252.49 L617.59,253.03 L617.73,253.51 L617.98,253.96 L618.33,254.36 L618.78,254.72 L619.29,255.06 L619.83,255.39 L620.38,255.73 L620.88,256.08 L621.32,256.46 L621.67,256.88 L621.90,257.34 L622.02,257.85 L622.02,258.39 L621.93,258.97 L621.77,259.56 L621.57,260.17 L621.37,260.77 L621.19,261.36 L621.09,261.93 L621.07,262.46 L621.17,262.96 L621.38,263.42 L621.69,263.85 L622.11,264.25 L622.58,264.64 L623.10,265.01 L623.61,265.40 L624.09,265.79 L624.49,266.21 L624.80,266.66 L624.99,267.14 L625.06,267.65 L625.02,268.19 L624.88,268.75 L624.67,269.33 L624.41,269.92 L624.16,270.51 L623.93,271.08 L623.78,271.63 L623.72,272.16 L623.77,272.67 L623.94,273.14 L624.22,273.60 L624.59,274.04 L625.03,274.46 L625.51,274.88 L625.99,275.31 L626.43,275.74 L626.79,276.19 L627.06,276.67 L627.21,277.16 L627.24,277.68 L627.15,278.21 L626.96,278.76 L626.70,279.32 L626.39,279.89 L626.09,280.44 L625.82,281.00 L625.62,281.53 L625.51,282.06 L625.51,282.56 L625.64,283.05 L625.88,283.53 L626.21,284.00 L626.62,284.46 L627.06,284.92 L627.50,285.39 L627.90,285.86 L628.22,286.34 L628.45,286.84 L628.55,287.34 L628.53,287.86 L628.40,288.38 L628.16,288.92 L627.85,289.45 L627.50,289.98 L627.15,290.51 L626.83,291.04 L626.58,291.56 L626.43,292.07 L626.39,292.58 L626.47,293.07 L626.67,293.57 L626.96,294.07 L627.32,294.56 L627.72,295.06 L628.12,295.56 L628.47,296.07 L628.76,296.57 L628.94,297.09 Z" fill="#ff00d5"/>
<circle cx="511" cy="297.6" r="2.6" fill="#000"/>
<path d="M645.5 347 V385 M627 365.5 H664" stroke="#555" stroke-width=".8" opacity=".7"/>
<rect x="655.7" y="176" width="262.5" height="340" fill="#262b82"/>
<path d="M918.5 271 L898 300 Q903 328 898 357 L918.5 386 Z" fill="#000"/>
<path d="M667.4 195.2 Q672 192 678.8 192.8 Q684 194 687.4 198.5 L690 202.5 L691.5 200.5 L693.5 202.5 L695 200.5 Q697 199 699.7 197.6 Q703 193 708.3 192.4 Q714 192 718.3 193.3 Q715 195 713 198.5 Q710 199 709 201.5 Q706 202 704.5 204.2 Q698 208 693 218.5 Q689 211 684 209 Q682 206 680 205.5 Q678 202 675 202 Q672 198 667.4 195.2 Z" fill="#000"/>
<path d="M694 236.6 Q700 227 708 226 L712 228 L714 225.5 L716 227.5 L718 226 Q723 222 727.3 218.5 Q733 213 745.9 214.7 Q740 217 739 221 Q736 223 737 226.5 Q732 228 731 232 Q728 236 727.3 243.3 Q722 238 716 237.5 Q712 240 708 238.5 Q702 237 696 239 Z" fill="#000"/>
<path d="M820.2 191 Q825 188 830 190 Q835 194 836.5 200 L838 204 Q843 206 846 205 Q849 201 852 202 Q857 206 859.7 213.3 Q855 210 851 211.5 Q847 211 845 212.5 Q841 212 838.5 215 L837.4 217 Q836 212 834 208 Q831 202 828 199 Q825 195 820.2 191 Z" fill="#000"/>
<circle cx="885.9" cy="214.3" r="19.6" fill="#1e2070"/>
<circle cx="885.9" cy="214.3" r="18" fill="#ffeb30"/>
<path d="M860.7 240 Q866 230 876 222 L883.5 217 L885 215.5 L886.5 217.5 L888.5 215.5 L889.5 218 Q894 222 897 230 Q900 240 902 249.5 Q897 243 894 239 Q891 234 890 230 L887.5 227.5 L885.5 230 L883 227.5 Q878 232 872 235 Q866 238 860.7 240 Z" fill="#000"/>
<rect x="771" y="192.4" width="31.700000000000045" height="3.2" fill="#000"/><rect x="771" y="198.0" width="31.700000000000045" height="2.5" fill="#000"/><path d="M771.80 200.5 V184.5 L770.20 185.5 L773.00 178.5 L775.80 185.5 L774.20 184.5 V200.5 Z" fill="#000"/><path d="M781.03 200.5 V184.5 L779.43 185.5 L782.23 178.5 L785.03 185.5 L783.43 184.5 V200.5 Z" fill="#000"/><path d="M790.27 200.5 V184.5 L788.67 185.5 L791.47 178.5 L794.27 185.5 L792.67 184.5 V200.5 Z" fill="#000"/><path d="M799.50 200.5 V184.5 L797.90 185.5 L800.70 178.5 L803.50 185.5 L801.90 184.5 V200.5 Z" fill="#000"/>
<path d="M755 208 H819 Q816 214 818 222 Q821 234 818 242 H757 Q754 234 757 222 Q759 214 755 208 Z" fill="#000"/>
<path d="M761 200 H812 L812 204.25 L812 208.5 H761 L761 204.25 Z" fill="#68217e"/>
<rect x="718" y="266.4" width="34" height="3.2" fill="#000"/><rect x="718" y="272.0" width="34" height="2.5" fill="#000"/><path d="M718.80 274.5 V260 L717.20 261 L720.00 254 L722.80 261 L721.20 260 V274.5 Z" fill="#000"/><path d="M728.80 274.5 V260 L727.20 261 L730.00 254 L732.80 261 L731.20 260 V274.5 Z" fill="#000"/><path d="M738.80 274.5 V260 L737.20 261 L740.00 254 L742.80 261 L741.20 260 V274.5 Z" fill="#000"/><path d="M748.80 274.5 V260 L747.20 261 L750.00 254 L752.80 261 L751.20 260 V274.5 Z" fill="#000"/>
<rect x="820" y="266.4" width="35" height="3.2" fill="#000"/><rect x="820" y="272.0" width="35" height="2.5" fill="#000"/><path d="M820.80 274.5 V260 L819.20 261 L822.00 254 L824.80 261 L823.20 260 V274.5 Z" fill="#000"/><path d="M831.13 274.5 V260 L829.53 261 L832.33 254 L835.13 261 L833.53 260 V274.5 Z" fill="#000"/><path d="M841.47 274.5 V260 L839.87 261 L842.67 254 L845.47 261 L843.87 260 V274.5 Z" fill="#000"/><path d="M851.80 274.5 V260 L850.20 261 L853.00 254 L855.80 261 L854.20 260 V274.5 Z" fill="#000"/>
<rect x="753" y="249" width="67" height="26" fill="#000"/>
<path d="M747.5 241.7 H824.5 L824.5 246.0 L824.5 250.3 H747.5 L747.5 246.0 Z" fill="#68217e"/>
<path d="M711 281 H864 Q866 296 875 306 Q879 311 883 315 H687 Q695 308 700 300 Q706 290 711 281 Z" fill="#000"/>
<path d="M702 273 L697.5 286 L700.5 285 L699 297 L704.5 304 L708 298 L705 292 L706 285 L707.5 286 Z" fill="#000"/>
<path d="M709.5 273.7 H775 L775 277.79999999999995 L775 281.9 H709.5 L709.5 277.79999999999995 Z" fill="#68217e"/>
<path d="M798 273.7 H863.5 L863.5 277.79999999999995 L863.5 281.9 H798 L798 277.79999999999995 Z" fill="#68217e"/>
<rect x="775" y="270" width="23" height="13" fill="#000"/>
<rect x="693" y="321" width="188" height="126" fill="#000"/>
<path d="M682 314.6 H892 L889 318.70000000000005 L892 322.8 H682 L685 318.70000000000005 Z" fill="#68217e"/>
<rect x="693.4" y="331.5" width="59.6" height="116" fill="#008e3b"/>
<rect x="821" y="331.5" width="59" height="116" fill="#008e3b"/>
<path d="M730 366.3 V342 Q730 332.5 739.8 332.5 Q749.6 332.5 749.6 342 V366.3 Z" fill="#000"/>
<path d="M733.5 364.5 L749.6 353.5 V358 L740 364.5 Z" fill="#008e3b"/>
<path d="M854 366 V342 Q854 332.5 863.4 332.5 Q872.7 332.5 872.7 342 V366 Z" fill="#000"/>
<path d="M854 352 L870 336 L872 338 L855 355 Z M857 338 L872.7 351 V354 L855 340 Z M854 358 L872.7 342 V345 L854 361 Z" fill="#008e3b"/>
<path d="M747.7 394 H825.5 L823.5 399.3 L825.5 404.6 H747.7 L749.7 399.3 Z" fill="#68217e"/>
<path d="M833.5 437 V417 Q833.5 408 842.6 408 Q851.7 408 851.7 417 V428 Z" fill="#000"/>
<path d="M834 434 L851.7 419 V424 L838 436.5 Z" fill="#008e3b"/>
<path d="M774 408.5 H787 V410.5 H776.3 L777 450.5 H774.6 Z" fill="#ffeb30"/>
<rect x="781.5" y="413.5" width="6.5" height="6" fill="#ffeb30"/><rect x="789.5" y="413" width="6.5" height="6" fill="#ffeb30"/>
<rect x="781.5" y="421.5" width="6.5" height="6" fill="#ffeb30"/><rect x="789.5" y="421" width="6.5" height="6.5" fill="#ffeb30"/>
<path d="M655.7 512 L661 488 Q665 468 668 458 Q670 446 677 439 Q686 432 695 437 Q700 434 706 437 Q710 439 712 441 Q730 443 745 446 Q752 441 760 446 L800 446 Q812 441 822 445 Q840 442 852 446 Q862 440 872 438 V425 Q872 414 885.5 414 Q899 414 899 425 V450 Q913 462 917 490 L918.5 516 V562.5 H655.7 Z" fill="#000"/>
<path d="M866 440 L872 433 M864 444 L872 438 M899 436 L906 440 M899 440 L908 446" stroke="#000" stroke-width="1.2"/>
<g transform="rotate(-6 683.5 420)"><rect x="680.5" y="407" width="6" height="28" fill="#000"/><rect x="672" y="416" width="22" height="5" fill="#000"/></g>
<g transform="rotate(8 703.5 425)"><rect x="701.5" y="413" width="4.5" height="26" fill="#000"/><rect x="695" y="420.5" width="17" height="4.5" fill="#000"/></g>
<path d="M711 430 L709.5 412 Q710 402 718 402 Q726.7 403 726.5 412 L726 424 Z" fill="#000"/>
<path d="M710 420 L725 408 L726.5 410 L711 423 Z M712 405 L726 418 L725 421 L710.5 408 Z" fill="#008e3b"/>
<path d="M690 502 L689 480 Q690 469.7 701 469.7 Q713 470.5 713.6 481 L712 496 Z" fill="#68217e"/>
<path d="M683 491 L692 500 M684 496 L691 501" stroke="#68217e" stroke-width="1.2"/>
<path d="M735 495 H739.5 V500.5 H747 V505 H739.5 V518 H735 V505 H727.7 V500.5 H735 Z" fill="#68217e"/>
<path d="M743 509 L745 506 M746 510 L749 507" stroke="#68217e" stroke-width="1.1"/>
<path d="M845.5 458.6 H851 V465.5 H861 V471 H851 V489 H845.5 V471 H835.6 V465.5 H845.5 Z" fill="#68217e"/>
<path d="M851 486 L858 478 M853 488 L861 482" stroke="#68217e" stroke-width="1.1"/>
<path d="M864.5 512 L865 495 Q866 485 874 485 Q882 486 882 496 L880 516 Z" fill="#68217e"/>
<path d="M847 507 L850 502 L852 507 L855 503" stroke="#68217e" stroke-width="1" fill="none"/>
<path d="M780 459.6 L796.4 460.40000000000003 L796.4 464.6 L780 463.8 Z" fill="#68217e"/>
<path d="M776 466 L798 466.8 L798 471 L776 470.2 Z" fill="#68217e"/>
<path d="M776 472 L794 472.0 L794 477 L776 477.0 Z" fill="#68217e"/>
<path d="M778 481 L796 481.8 L796 486 L778 485.2 Z" fill="#68217e"/>
<path d="M785 489 L804.5 488.2 L804.5 497 L785 497.8 Z" fill="#68217e"/>
<path d="M792 501 L808 501.0 L808 509 L792 509.0 Z" fill="#68217e"/>
<path d="M779 513 L800.5 513.8 L800.5 521 L779 520.2 Z" fill="#68217e"/>
<path d="M771 525 L790 525.8 L790 532 L771 531.2 Z" fill="#68217e"/>
<path d="M761 536 L782 536.8 L782 544.5 L761 543.7 Z" fill="#68217e"/>
<path d="M771 549.5 L791 550.3 L791 554.6 L771 553.8000000000001 Z" fill="#68217e"/>
<rect x="363.5" y="167.5" width="564.5" height="395" fill="none" stroke="#3cc4a4" stroke-width="1.5"/>
<circle cx="363.5" cy="167.5" r="4.2" fill="#fff" stroke="#3cc4a4" stroke-width="1.8"/>
<circle cx="928" cy="167.5" r="4.2" fill="#fff" stroke="#3cc4a4" stroke-width="1.8"/>
<circle cx="928" cy="562.5" r="4.2" fill="#fff" stroke="#3cc4a4" stroke-width="1.8"/>
<rect x="637" y="163.2" width="18" height="8.6" rx="4.3" fill="#fff" stroke="#3cc4a4" stroke-width="1.8"/>
<rect x="637" y="558.2" width="18" height="8.6" rx="4.3" fill="#fff" stroke="#3cc4a4" stroke-width="1.8"/>
<rect x="359.2" y="356" width="8.6" height="18" rx="4.3" fill="#fff" stroke="#3cc4a4" stroke-width="1.8"/>
<rect x="923.7" y="356" width="8.6" height="18" rx="4.3" fill="#fff" stroke="#3cc4a4" stroke-width="1.8"/>
</svg>
<!-- /design -->
<!-- canvas scrollbars -->
<div class="a" style="left:1250px;top:120px;width:14px;height:1.3px;background:#d6d6d6"></div>
<div class="a" style="left:1250px;top:121.3px;width:14px;height:13.7px;background:#fafafa"></div>
<div class="a" style="left:1250px;top:135px;width:14px;height:697px;background:#f1f1f1"></div>
<div class="a" style="left:1251px;top:135px;width:12px;height:33px;background:#c1c1c1"></div>
<div class="a" style="left:316px;top:832px;width:934px;height:9px;background:#f1f1f1"></div>
<div class="a" style="left:334px;top:832px;width:56px;height:9px;background:#c1c1c1"></div>

<!-- right panel -->
<div class="a" style="left:1264px;top:83px;width:1px;height:758px;background:#e6e6e6"></div>
<!-- right panel content -->
<div class="t" style="left:1279px;top:96px;font-size:11px;font-weight:bold;color:#1b8562">Layers</div>
<div class="t" style="left:1338px;top:96px;font-size:11px;color:#666">Color Sync</div>
<div class="a" style="left:1265px;top:118.5px;width:235px;height:1px;background:#ececec"></div>
<div class="a" style="left:1266px;top:117px;width:60px;height:2.5px;border-radius:1px;background:#03845e"></div>
<svg class="a" style="left:1279px;top:129px" width="17" height="17" viewBox="0 0 17 17"><path d="M3 3 H10 M3 3 V10 M10 3 L13.5 9 M3 10 L7 13.5 M7 13.5 H13.5 M13.5 9 V13.5" fill="none" stroke="#333" stroke-width="1.1"/><circle cx="3" cy="3" r="1.8" fill="#fff" stroke="#333" stroke-width="1.1"/><circle cx="10" cy="3" r="1.8" fill="#fff" stroke="#333" stroke-width="1.1"/><circle cx="3" cy="10" r="1.8" fill="#fff" stroke="#333" stroke-width="1.1"/><circle cx="13.5" cy="9" r="1.8" fill="#fff" stroke="#333" stroke-width="1.1"/><circle cx="7" cy="13.5" r="1.8" fill="#fff" stroke="#333" stroke-width="1.1"/><circle cx="13.5" cy="13.5" r="1.8" fill="#fff" stroke="#333" stroke-width="1.1"/><circle cx="8.5" cy="9" r="1.8" fill="#fff" stroke="#333" stroke-width="1.1"/></svg>
<svg class="a" style="left:1311px;top:130px" width="16" height="16" viewBox="0 0 16 16"><path d="M4 11.5 H1.5 V1.5 H11.5 V4" fill="none" stroke="#333" stroke-width="1.2"/><rect x="4.5" y="4.5" width="10" height="10" fill="#fff" stroke="#333" stroke-width="1.2"/><path d="M9.5 7 V12 M7 9.5 H12" stroke="#333" stroke-width="1.2"/></svg>
<svg class="a" style="left:1344px;top:130px" width="15" height="16" viewBox="0 0 15 16"><path d="M1 3.5 H14 M5 3.5 V1.5 H10 V3.5 M2.5 3.5 L3.5 14.5 H11.5 L12.5 3.5 M6 6.5 V12 M9 6.5 V12" fill="none" stroke="#333" stroke-width="1.2" stroke-linejoin="round"/></svg>
<div class="a" style="left:1265px;top:157px;width:235px;height:1px;background:#efefef"></div>
<div class="a" style="left:1488.5px;top:158px;width:11.5px;height:568px;background:#f1f1f1"></div>
<svg class="a" style="left:1491px;top:163px" width="7" height="5" viewBox="0 0 7 5"><path d="M0.5 4 L3.5 1 L6.5 4 Z" fill="#a0a0a0"/></svg>
<svg class="a" style="left:1491px;top:716px" width="7" height="5" viewBox="0 0 7 5"><path d="M0.5 1 L3.5 4 L6.5 1 Z" fill="#a0a0a0"/></svg>
<div class="a" style="left:1270px;top:161.5px;width:215.5px;height:43px;border-radius:3px;background:#b6eadb"></div>
<svg class="a" style="left:1277px;top:176px" width="8" height="11" viewBox="0 0 8 11"><path d="M2 1.5 L6 5.5 L2 9.5" fill="none" stroke="#333" stroke-width="1.4"/></svg>
<svg class="a" style="left:1296px;top:175px" width="16" height="16" viewBox="0 0 16 16"><path d="M1 4.5 V1 H4.5 M11.5 1 H15 V4.5 M15 11.5 V15 H11.5 M4.5 15 H1 V11.5" fill="none" stroke="#333" stroke-width="1.3"/><rect x="4.3" y="4.3" width="5" height="5" fill="none" stroke="#333" stroke-width="1.1"/><rect x="6.5" y="6.5" width="5" height="5" fill="#b6eadb" stroke="#333" stroke-width="1.1"/></svg>
<div class="t" style="left:1319.5px;top:177.5px;font-size:11px;font-weight:bold;color:#333">Group</div>

<div class="a" style="left:1265px;top:726px;width:235px;height:1px;background:#eeeeee"></div>
<div class="a" style="left:1279px;top:739px;width:14px;height:13px;border:1px solid #ececec;border-radius:2px"></div>
<div class="t" style="left:1300.5px;top:741px;font-size:9.9px;color:#666">Background Color</div>
<div class="a" style="left:1265px;top:764px;width:235px;height:1px;background:#f2f2f2"></div>
<svg class="a" style="left:1286px;top:770px" width="16" height="16" viewBox="0 0 16 16"><path d="M1.5 10.5 V1.5 H10.5 V5.5 M5.5 5.5 H14.5 V14.5 H5.5 Z" fill="none" stroke="#e4e4e4" stroke-width="1.2"/></svg>
<div class="t" style="left:1276px;top:790.5px;width:35px;text-align:center;font-size:8px;color:#e2e2e2">Slice</div>
<svg class="a" style="left:1325px;top:769px" width="26" height="17" viewBox="0 0 26 17"><rect x="1" y="1" width="9" height="9" fill="none" stroke="#333" stroke-width="1.2"/><circle cx="9.5" cy="10" r="5" fill="#fff" stroke="#333" stroke-width="1.2"/><path d="M5 6.5 H10" stroke="#333" stroke-width="0"/><path d="M19 6 H25 L22 9.5 Z" fill="#222"/></svg>
<div class="t" style="left:1316px;top:790.5px;width:41px;text-align:center;font-size:8px;color:#555">Combine</div>
<svg class="a" style="left:1371px;top:772px" width="17" height="11" viewBox="0 0 17 11"><path d="M11 2.5 H4.5 Q1.5 2.5 1.5 5.5 Q1.5 8.5 4.5 8.5 H12.5 Q15.5 8.5 15.5 5.5 Q15.5 2.5 12.5 2.5 M6 5.5 H12" fill="none" stroke="#333" stroke-width="1.3"/><path d="M4.5 5.5 Q4.5 4 6 4 H12.5 Q14 4 14 5.5" fill="none" stroke="#333" stroke-width="0"/></svg>
<div class="t" style="left:1359px;top:790.5px;width:41px;text-align:center;font-size:8px;color:#555">Attach</div>
<svg class="a" style="left:1414px;top:769px" width="16" height="17" viewBox="0 0 16 17"><path d="M8 1 V8 M5.5 5.5 L8 8 L10.5 5.5 M1.5 7.5 L8 12 L14.5 7.5 M1.5 11 L8 15.5 L14.5 11" fill="none" stroke="#333" stroke-width="1.3"/></svg>
<div class="t" style="left:1401px;top:790.5px;width:41px;text-align:center;font-size:8px;color:#555">Flatten</div>
<svg class="a" style="left:1456px;top:769px" width="17" height="17" viewBox="0 0 17 17"><circle cx="8.5" cy="8.5" r="7" fill="none" stroke="#e6e6e6" stroke-width="1.2" stroke-dasharray="2 1.5"/></svg>
<div class="t" style="left:1444px;top:790.5px;width:41px;text-align:center;font-size:8px;color:#e4e4e4">Contour</div>

<!-- banner -->
<div class="a" style="left:1267px;top:803.5px;width:233px;height:37.5px;background:#0b2383"></div>
<svg class="a" style="left:1278px;top:813px" width="27" height="22" viewBox="0 0 27 22"><path d="M3 2 H25 L20 17 H6 L4 21 L3 17 Z" fill="#1aa97b"/><path d="M7.5 7 Q9 4.5 12 4.5 Q15.5 4.5 15.5 8 V13.5 M15.5 9.5 H11 Q8 9.5 8 11.7 Q8 14 11 14 Q13.5 14 15.5 12" fill="none" stroke="#fff" stroke-width="1.8"/></svg>
<div class="t" style="left:1310px;top:818px;font-size:12.5px;font-weight:bold;color:#fff;transform:scaleX(0.87);transform-origin:0 0">Cricut Discount Sales!</div>
<svg class="a" style="left:1427px;top:818px" width="14" height="13" viewBox="0 0 14 13"><path d="M1 1.5 H3 L5 9 H12 L13 3.5 H4" fill="#8a9aa8" stroke="#b8c0c8" stroke-width="1.2" stroke-linejoin="round"/><circle cx="6" cy="11.3" r="1.2" fill="#b8c0c8"/><circle cx="11" cy="11.3" r="1.2" fill="#b8c0c8"/></svg>
<svg class="a" style="left:1483px;top:820px" width="9" height="9" viewBox="0 0 9 9"><path d="M1 1 L8 8 M8 1 L1 8" stroke="#fff" stroke-width="1.6"/></svg>

<!-- size label -->
<div class="a" style="left:603px;top:572.5px;width:84px;height:27.5px;border-radius:4px;background:#14a77a"></div>
<div class="t" style="left:603px;top:580px;width:84px;text-align:center;font-size:12px;font-weight:bold;color:#fff;letter-spacing:-0.35px;word-spacing:0.5px">10 in x 7 in</div>

<!-- ruler collapse tab + hand cursor -->
<div class="a" style="left:314px;top:428px;width:10px;height:72px;background:#fff"></div>
<svg class="a" style="left:313px;top:454px" width="8" height="10" viewBox="0 0 8 10"><path d="M6 1.5 L2.5 5 L6 8.5" fill="none" stroke="#222" stroke-width="1.2"/></svg>
<svg class="a" style="left:309.4px;top:459.9px" width="33.6" height="38.5" viewBox="0 0 28 36" preserveAspectRatio="none"><path d="M9.5 3 Q9.5 1 11.5 1 Q13.5 1 13.5 3 V14 Q15 12.5 16.5 13.5 Q17.5 12 19 13 Q20.5 12.5 21.5 14 Q23.5 13.5 24.5 15.5 V26 Q24.5 33 17.5 34 Q11 34.5 7.5 30 L2.5 22.5 Q1.5 20.5 3.5 19.5 Q5.5 18.8 7.5 21 L9.5 23 Z" fill="#000" stroke="#fff" stroke-width="1.3" stroke-linejoin="round"/><path d="M16.5 14 V19 M19.5 14 V19 M22.5 16 V19.5" stroke="#fff" stroke-width="1"/></svg>

<!-- teal arrow -->
<svg class="a" style="left:0;top:0" width="1500" height="841" viewBox="0 0 1500 841"><path d="M321.6 493.5 L358.5 516.2 L346.8 523.5 L410.8 629 L398.8 636 L335 530.5 L323.8 537 Z" fill="#1b6d84"/></svg>

<!-- zoom control -->
<div class="a" style="left:343.5px;top:798.5px;width:92px;height:25.5px;border-radius:13px;background:#f4f4f4;box-shadow:0 1px 3px rgba(0,0,0,.04)"></div>
<svg class="a" style="left:347px;top:803px" width="17" height="17" viewBox="0 0 17 17"><circle cx="8.5" cy="8.5" r="7.2" fill="none" stroke="#cfcfcf" stroke-width="1.3"/><path d="M4.5 8.5 H12.5" stroke="#cfcfcf" stroke-width="1.3"/></svg>
<div class="t" style="left:368.5px;top:803px;font-size:15px;color:#c8c8c8">100%</div>
<svg class="a" style="left:414px;top:803px" width="17" height="17" viewBox="0 0 17 17"><circle cx="8.5" cy="8.5" r="7.2" fill="none" stroke="#cfcfcf" stroke-width="1.3"/><path d="M4.5 8.5 H12.5 M8.5 4.5 V12.5" stroke="#cfcfcf" stroke-width="1.3"/></svg>

<!-- toast -->
<div class="a" style="left:613.5px;top:793.5px;width:281px;height:42.5px;border-radius:3px;background:#2a2a2a;box-shadow:0 1px 3px rgba(0,0,0,.25)"></div>
<svg class="a" style="left:626px;top:804.5px" width="17" height="17" viewBox="0 0 17 17"><circle cx="8.5" cy="8.5" r="8.3" fill="#3cc79e"/><path d="M5 8.7 L7.5 11.2 L12 6.3" fill="none" stroke="#222" stroke-width="1.4"/></svg>
<div class="t" style="left:653.5px;top:807.5px;font-size:12px;color:#fff">Uploaded</div>

<!-- watermark -->
<div class="a" style="left:0;top:779px;width:336px;height:53px;background:rgba(255,255,255,0.62)"></div>
<div class="a" style="left:0;top:832px;width:316px;height:9px;background:rgba(255,255,255,0.62)"></div>
<div class="t" style="left:120px;top:822px;font-size:11.5px;color:#a9d8c6">Advanced Search</div>
<div class="a" style="left:79px;top:802.5px;width:75px;height:3.5px;background:#8e8e8e"></div>
<div class="t" style="left:13.6px;top:787px;font-family:'Liberation Serif',serif;font-size:43px;font-weight:bold;color:#1a6c84;-webkit-text-stroke:0.7px #1a6c84;letter-spacing:-1.2px;transform:scaleX(1.041);transform-origin:0 0">Craft with Sarah</div>

<!-- scrollbar arrows -->
<svg class="a" style="left:304px;top:86px" width="7" height="5" viewBox="0 0 7 5"><path d="M0.5 4 L3.5 1 L6.5 4 Z" fill="#a0a0a0"/></svg>
<svg class="a" style="left:304px;top:834px" width="7" height="5" viewBox="0 0 7 5"><path d="M0.5 1 L3.5 4 L6.5 1 Z" fill="#707070"/></svg>
<svg class="a" style="left:1253px;top:125px" width="7" height="5" viewBox="0 0 7 5"><path d="M0.5 4 L3.5 1 L6.5 4 Z" fill="#a0a0a0"/></svg>
<svg class="a" style="left:1253px;top:821px" width="7" height="5" viewBox="0 0 7 5"><path d="M0.5 1 L3.5 4 L6.5 1 Z" fill="#606060"/></svg>
<svg class="a" style="left:1240px;top:833px" width="5" height="7" viewBox="0 0 5 7"><path d="M1 0.5 L4 3.5 L1 6.5 Z" fill="#606060"/></svg>


</div>
</body></html>
